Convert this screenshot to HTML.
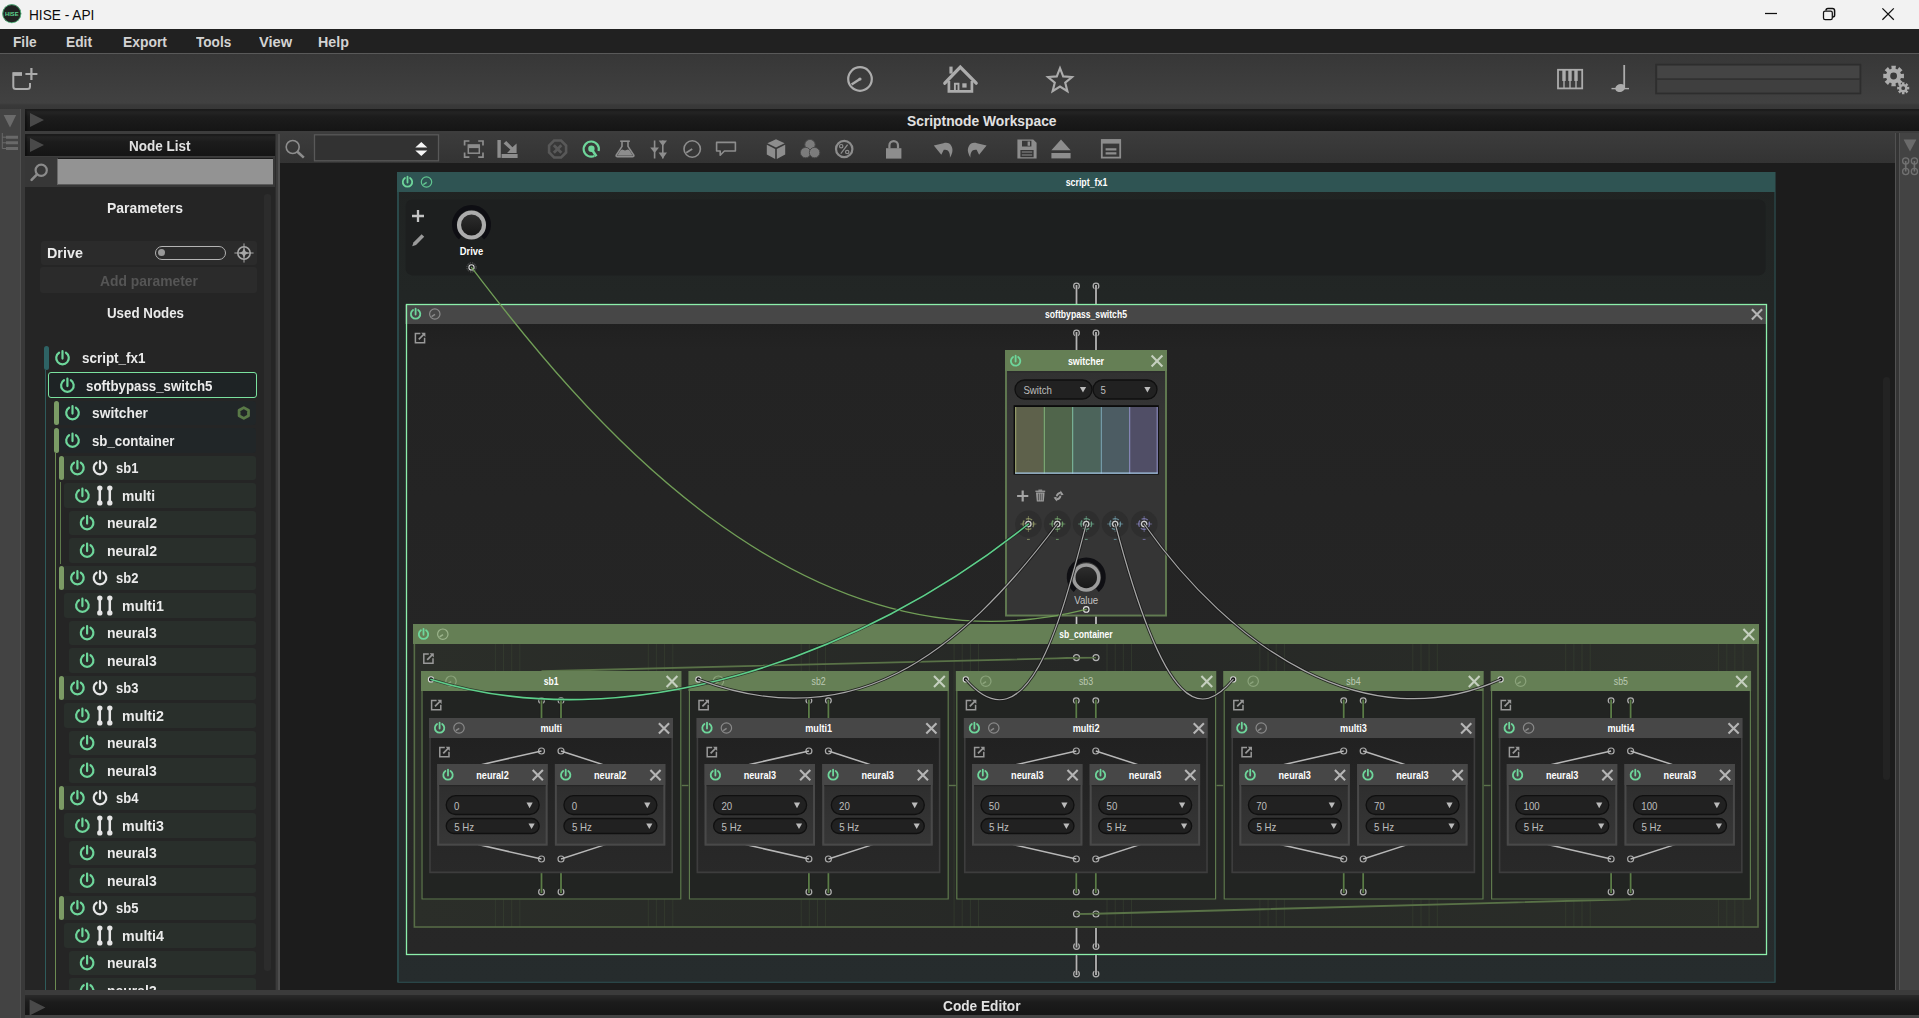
<!DOCTYPE html>
<html lang="en"><head><meta charset="utf-8"><title>HISE - API</title>
<style>
html,body{margin:0;padding:0;background:#1d1d1d;}
body{width:1919px;height:1018px;position:relative;overflow:hidden;font-family:"Liberation Sans",sans-serif;}
#app{position:absolute;left:0;top:0;width:1919px;height:1018px;overflow:hidden;opacity:.9999;will-change:opacity;}
#app div,#app span,#app svg,#app nav,#app ul,#app li,#app header,#app section,#app aside,#app footer,#app h1,#app h2,#app a{position:absolute;margin:0;padding:0;box-sizing:border-box;list-style:none;}
.t{white-space:nowrap;transform-origin:0 50%;display:block;}
svg text{font-family:"Liberation Sans",sans-serif;}
</style></head><body><div id="app">
<header style="left:0;top:0;width:1919px;height:29px;background:#f3f3f3">
<svg style="left:1px;top:3px" width="22" height="22" viewBox="0 0 22 22"><circle cx="10.8" cy="10.7" r="9.4" fill="#222423"/><circle cx="10.8" cy="10.7" r="9.1" fill="none" stroke="#5bcf8c" stroke-width="0.9" stroke-opacity="0.85"/><text x="10.8" y="12.8" font-size="5.8" font-weight="700" fill="#5fd692" text-anchor="middle" textLength="13.4" lengthAdjust="spacingAndGlyphs">HISE</text></svg>
<h1 class="t" style="left:28.50px;top:6px;font-size:15px;line-height:17px;font-weight:400;color:#0c0c0c;transform:scaleX(0.9108)">HISE - API</h1>
<svg style="left:1750px;top:0" width="169" height="29" viewBox="0 0 169 29" fill="none" stroke="#111" stroke-width="1.25"><path d="M15 13.5H27"/><rect x="73.5" y="11.2" width="8.8" height="8.4" rx="1.6"/><path d="M76 10.6a2 2 0 0 1 2-2H82.4a2.2 2.2 0 0 1 2.2 2.2V15a2 2 0 0 1-1.9 2" stroke-width="1.5"/><path d="M132.4 8.4L143.8 19.8M143.8 8.4L132.4 19.8"/></svg>
</header>
<nav style="left:0;top:29px;width:1919px;height:25px;background:#222222;border-bottom:1px solid #5a5a5a">
<a class="t" style="left:13.00px;top:5px;font-size:14.6px;line-height:16px;font-weight:700;color:#d4d4d4;transform:scaleX(0.9383)">File</a>
<a class="t" style="left:66.00px;top:5px;font-size:14.6px;line-height:16px;font-weight:700;color:#d4d4d4;transform:scaleX(0.9429)">Edit</a>
<a class="t" style="left:123.00px;top:5px;font-size:14.6px;line-height:16px;font-weight:700;color:#d4d4d4;transform:scaleX(0.9516)">Export</a>
<a class="t" style="left:195.70px;top:5px;font-size:14.6px;line-height:16px;font-weight:700;color:#d4d4d4;transform:scaleX(0.9327)">Tools</a>
<a class="t" style="left:258.50px;top:5px;font-size:14.6px;line-height:16px;font-weight:700;color:#d4d4d4;transform:scaleX(1.0058)">View</a>
<a class="t" style="left:318.40px;top:5px;font-size:14.6px;line-height:16px;font-weight:700;color:#d4d4d4;transform:scaleX(0.9767)">Help</a>
</nav>
<div style="left:0;top:54px;width:1919px;height:55px;background:linear-gradient(#383838 0,#424242 49px,#3a3a3a 51px,#383838 55px)">
<svg style="left:8px;top:10px" width="34" height="32" viewBox="8 64 34 32" fill="none" stroke="#adadad" stroke-width="2"><path d="M22 73.2H13.3V86.5a2.6 2.6 0 0 0 2.6 2.6H27.4a2.6 2.6 0 0 0 2.6-2.6V83"/><path d="M13 74.2H22" stroke-width="3.4"/><path d="M31.4 68V80M25.4 74H37.4" stroke-width="2.2"/></svg>
<svg style="left:840px;top:6px" width="240" height="40" viewBox="840 60 240 40" fill="none" stroke="#adadad" stroke-width="2.2" stroke-linejoin="miter"><circle cx="860" cy="79" r="11.8"/><path d="M860 79L851.6 84.6" stroke-width="2.4"/><circle cx="860" cy="79" r="1.6" fill="#adadad" stroke="none"/><path d="M944.8 83.2L960.3 67.2L976.2 83.2" stroke-width="3.3" stroke-linecap="round"/><path d="M948.9 81V91.3H971.9V81" stroke-width="2.7"/><path d="M954.9 92V83.7H958.5V92" stroke-width="1.9"/><rect x="962.3" y="83.3" width="4.3" height="4.3" fill="#adadad" stroke="none"/><rect x="949.4" y="66.6" width="3.2" height="7" fill="#adadad" stroke="none"/><path d="M1060 68.2L1063.2 76.4L1072 77L1065.2 82.6L1067.4 91.2L1060 86.5L1052.6 91.2L1054.8 82.6L1048 77L1056.8 76.4Z" stroke-width="2.1"/></svg>
<svg style="left:1550px;top:4px" width="369" height="46" viewBox="1550 58 369 46" fill="none" stroke="#adadad" stroke-width="1.8"><rect x="1558" y="69.8" width="24.2" height="18.6"/><path d="M1564 70V88M1570 70V88M1576 70V88" stroke-width="1.4"/><path d="M1564 70V81M1570 70V81M1576 70V81" stroke-width="3.4"/><path d="M1624.2 65V88" stroke-width="1.8"/><ellipse cx="1620.2" cy="88" rx="5" ry="3.9" fill="#adadad" stroke="none" transform="rotate(-20 1620.2 88)"/><path d="M1611.5 88.6H1629" stroke-width="1.4"/><rect x="1656" y="64.5" width="204.5" height="29" fill="#3a3a3a" stroke="#2e2e2e" stroke-width="1.6"/><path d="M1657 79H1859.6" stroke="#303030" stroke-width="1.4"/><rect x="1657.4" y="65.8" width="201.8" height="12.4" fill="#454545" stroke="none"/><rect x="1657.4" y="80" width="201.8" height="12.4" fill="#404040" stroke="none"/></svg>
<svg style="left:1875px;top:6px" width="44" height="44" viewBox="1875 60 44 44"><path fill-rule="evenodd" fill="#adadad" d="M1903.94,73.69 L1903.94,78.31 L1900.95,77.95 L1900.17,79.82 L1902.55,81.68 L1899.28,84.95 L1897.42,82.57 L1895.55,83.35 L1895.91,86.34 L1891.29,86.34 L1891.65,83.35 L1889.78,82.57 L1887.92,84.95 L1884.65,81.68 L1887.03,79.82 L1886.25,77.95 L1883.26,78.31 L1883.26,73.69 L1886.25,74.05 L1887.03,72.18 L1884.65,70.32 L1887.92,67.05 L1889.78,69.43 L1891.65,68.65 L1891.29,65.66 L1895.91,65.66 L1895.55,68.65 L1897.42,69.43 L1899.28,67.05 L1902.55,70.32 L1900.17,72.18 L1900.95,74.05Z M1897.00,76.00 a3.4,3.4 0 1,0 -6.8,0 a3.4,3.4 0 1,0 6.8,0Z"/><path fill-rule="evenodd" fill="#adadad" d="M1909.25,86.85 L1909.25,89.55 L1907.45,89.33 L1907.00,90.41 L1908.43,91.52 L1906.52,93.43 L1905.41,92.00 L1904.33,92.45 L1904.55,94.25 L1901.85,94.25 L1902.07,92.45 L1900.99,92.00 L1899.88,93.43 L1897.97,91.52 L1899.40,90.41 L1898.95,89.33 L1897.15,89.55 L1897.15,86.85 L1898.95,87.07 L1899.40,85.99 L1897.97,84.88 L1899.88,82.97 L1900.99,84.40 L1902.07,83.95 L1901.85,82.15 L1904.55,82.15 L1904.33,83.95 L1905.41,84.40 L1906.52,82.97 L1908.43,84.88 L1907.00,85.99 L1907.45,87.07Z M1905.10,88.20 a1.9,1.9 0 1,0 -3.8,0 a1.9,1.9 0 1,0 3.8,0Z"/></svg>
</div>
<div style="left:0;top:109px;width:20px;height:909px;background:#444444"></div>
<div style="left:20px;top:109px;width:5px;height:909px;background:#3a3a3a;border-left:1px solid #505050"></div>
<svg style="left:0;top:109px" width="20" height="50" viewBox="0 109 20 50"><path d="M3.6 115H16.2L10 127.4Z" fill="#6c6c6c"/><g fill="none" stroke="#6a6a6a"><path d="M2.3 133V148.5H6" stroke-width="1"/><path d="M2.3 137.2H6M2.3 142.8H6" stroke-width="1"/><path d="M6 137.2H18M6 142.8H18M6 148.5H18" stroke-width="3"/></g></svg>
<div style="left:25px;top:109px;width:1894px;height:22px;background:linear-gradient(#2b2b2b 0,#1d1d1d 35%,#161616 100%);box-shadow:inset 2px 2px 2px rgba(0,0,0,.35)">
<svg style="left:4px;top:3px" width="16" height="16" viewBox="0 0 16 16"><path d="M1 1L15 8L1 15Z" fill="#4a4a4a"/></svg>
<h2 class="t" style="left:882.25px;top:3px;font-size:15px;line-height:17px;font-weight:700;color:#e2e2e2;transform:scaleX(0.9213)">Scriptnode Workspace</h2>
</div>
<div style="left:25px;top:131px;width:1894px;height:3px;background:#3e3e3e"></div>
<div style="left:1895px;top:133px;width:24px;height:862px;background:#444444;border-left:1px solid #525252"></div>
<div style="left:1896px;top:133px;width:3.8px;height:862px;background:#363636;border-right:1px solid #535353"></div>
<svg style="left:1899px;top:134px" width="20" height="46" viewBox="1899 134 20 46"><path d="M1903.6 139.4H1916.4L1910 151.6Z" fill="#6c6c6c"/><g fill="none" stroke="#727272" stroke-width="1.3"><circle cx="1905.7" cy="161" r="3.1"/><circle cx="1914.4" cy="161" r="3.1"/><circle cx="1905.7" cy="171.5" r="3.1"/><circle cx="1914.4" cy="171.5" r="3.1"/><path d="M1905.7 161V171.5M1914.4 161V171.5" stroke-width="1.6"/></g></svg>
<footer style="left:25px;top:990px;width:1894px;height:28px;background:#3c3c3c">
<div style="left:0;top:5px;width:1894px;height:20px;background:linear-gradient(#2b2b2b 0,#1d1d1d 35%,#161616 100%)"></div>
<div style="left:0;top:25px;width:1894px;height:3px;background:#454545"></div>
<svg style="left:4px;top:8.5px" width="17" height="17" viewBox="0 0 17 17"><path d="M0.6 0.6L16.4 8.5L0.6 16.4Z" fill="#4a4a4a"/></svg>
<h2 class="t" style="left:918.25px;top:7px;font-size:15px;line-height:17px;font-weight:700;color:#e2e2e2;transform:scaleX(0.9118)">Code Editor</h2>
</footer>
<aside style="left:25px;top:134px;width:255px;height:856px;background:#262626;overflow:hidden">
<div style="left:0;top:0;width:250px;height:22px;background:linear-gradient(#2b2b2b 0,#1d1d1d 35%,#161616 100%);box-shadow:inset 2px 2px 2px rgba(0,0,0,.35)">
<svg style="left:4px;top:3px" width="16" height="16" viewBox="0 0 16 16"><path d="M1 1L15 8L1 15Z" fill="#4a4a4a"/></svg>
<h2 class="t" style="left:104.25px;top:3px;font-size:15px;line-height:17px;font-weight:700;color:#e2e2e2;transform:scaleX(0.9000)">Node List</h2>
</div>
<div style="left:0;top:22px;width:250px;height:31px;background:#383838;border-top:1px solid #3e3e3e">
<svg style="left:3px;top:3px" width="26" height="26" viewBox="28 160 26 26" fill="none" stroke="#8c8c8c" stroke-width="2.2" stroke-linecap="round"><circle cx="41.2" cy="170.2" r="5.6"/><path d="M37 174.4L31.6 179.8" stroke-width="2.6"/></svg>
<div style="left:32px;top:1px;width:216px;height:27px;background:#949494;border-top:1.5px solid #1e1e1e;border-bottom:1.5px solid #5c5c5c;border-left:1px solid #6a6a6a"></div>
</div>
<div style="left:250px;top:0;width:5px;height:856px;background:#3c3c3c;border-right:1px solid #242424;border-left:1px solid #2e2e2e"></div>
<div style="left:253.4px;top:0;width:1.2px;height:856px;background:#4e4e4e"></div>
<div style="left:239px;top:60px;width:6.5px;height:777px;background:#2d2d2d;border-radius:3px"></div>
<h2 class="t" style="left:82.00px;top:65px;font-size:15px;line-height:17px;font-weight:700;color:#ececec;transform:scaleX(0.9299)">Parameters</h2>
<div style="left:16px;top:106.5px;width:215.5px;height:24.5px;background:#2c2c2c;border-radius:3px"></div>
<span class="t" style="left:21.50px;top:110px;font-size:15.4px;line-height:17px;font-weight:700;color:#ececec;transform:scaleX(0.9319)">Drive</span>
<div style="left:129.5px;top:112px;width:71.5px;height:13.6px;border:1.6px solid #b4b4b4;border-radius:7px"></div>
<div style="left:132.6px;top:115.3px;width:7px;height:7px;border-radius:50%;background:#9a9a9a"></div>
<svg style="left:209px;top:109px" width="20" height="20" viewBox="-10 -10 20 20" fill="none" stroke="#a8a8a8"><circle r="6.2" stroke-width="1.6"/><path d="M0 -9.6V9.6M-9.6 0H9.6" stroke-width="1"/><path d="M0 -5L1.6 -1.6L5 0L1.6 1.6L0 5L-1.6 1.6L-5 0L-1.6 -1.6Z" fill="#a8a8a8" stroke="none"/></svg>
<div style="left:15px;top:133px;width:217px;height:26.4px;background:#2c2c2c;border-radius:3px"></div>
<span class="t" style="left:75.00px;top:138px;font-size:15.2px;line-height:17px;font-weight:700;color:#565656;transform:scaleX(0.9135)">Add parameter</span>
<h2 class="t" style="left:81.50px;top:170px;font-size:15px;line-height:17px;font-weight:700;color:#ececec;transform:scaleX(0.8882)">Used Nodes</h2>
<ul style="left:0;top:0;width:250px;height:856px">
<div style="left:20.4px;top:236px;width:1px;height:620px;background:#2f5c5c"></div>
<div style="left:30.2px;top:319px;width:1.2px;height:537px;background:#6d8c52"></div>
<li><div style="left:19.0px;top:211.8px;width:5px;height:24.4px;background:#2f6466;border-radius:2.5px"></div><span class="t" style="left:56.50px;top:215px;font-size:15.4px;line-height:17px;font-weight:700;color:#ececec;transform:scaleX(0.8727)">script_fx1</span></li>
<li><div style="left:23.0px;top:239.1px;width:209.0px;height:24.4px;background:#1f2426;border-radius:3px;border:1.6px solid #7be3a0;height:26px;margin-top:-0.8px"></div><span class="t" style="left:61.40px;top:243px;font-size:15.4px;line-height:17px;font-weight:700;color:#ececec;transform:scaleX(0.8643)">softbypass_switch5</span></li>
<li><div style="left:32.0px;top:266.8px;width:199.0px;height:24.4px;background:#222729;border-radius:3px;"></div><div style="left:29.0px;top:266.8px;width:5px;height:24.4px;background:#7c9c66;border-radius:2.5px"></div><span class="t" style="left:66.50px;top:270px;font-size:15.4px;line-height:17px;font-weight:700;color:#ececec;transform:scaleX(0.8963)">switcher</span></li>
<li><div style="left:32.0px;top:294.3px;width:199.0px;height:24.4px;background:#222729;border-radius:3px;"></div><div style="left:29.0px;top:294.3px;width:5px;height:24.4px;background:#7c9c66;border-radius:2.5px"></div><span class="t" style="left:66.50px;top:298px;font-size:15.4px;line-height:17px;font-weight:700;color:#ececec;transform:scaleX(0.8607)">sb_container</span></li>
<li><div style="left:37.0px;top:321.8px;width:194.0px;height:24.4px;background:#2a302c;border-radius:3px;"></div><div style="left:34.0px;top:321.8px;width:5px;height:24.4px;background:#7c9c66;border-radius:2.5px"></div><span class="t" style="left:91.40px;top:325px;font-size:15.4px;line-height:17px;font-weight:700;color:#ececec;transform:scaleX(0.8441)">sb1</span></li>
<div style="left:35.2px;top:347.5px;width:1.2px;height:82px;background:#5f7a4c"></div>
<li><div style="left:39.0px;top:349.3px;width:192.0px;height:24.4px;background:#2a302c;border-radius:3px;"></div><span class="t" style="left:96.80px;top:353px;font-size:15.4px;line-height:17px;font-weight:700;color:#ececec;transform:scaleX(0.8971)">multi</span></li>
<li><div style="left:44.2px;top:376.8px;width:186.8px;height:24.4px;background:#2a302c;border-radius:3px;"></div><span class="t" style="left:81.50px;top:380px;font-size:15.4px;line-height:17px;font-weight:700;color:#ececec;transform:scaleX(0.9127)">neural2</span></li>
<li><div style="left:44.2px;top:404.3px;width:186.8px;height:24.4px;background:#2a302c;border-radius:3px;"></div><span class="t" style="left:81.50px;top:408px;font-size:15.4px;line-height:17px;font-weight:700;color:#ececec;transform:scaleX(0.9127)">neural2</span></li>
<li><div style="left:37.0px;top:431.8px;width:194.0px;height:24.4px;background:#2a302c;border-radius:3px;"></div><div style="left:34.0px;top:431.8px;width:5px;height:24.4px;background:#7c9c66;border-radius:2.5px"></div><span class="t" style="left:91.40px;top:435px;font-size:15.4px;line-height:17px;font-weight:700;color:#ececec;transform:scaleX(0.8441)">sb2</span></li>
<li><div style="left:39.0px;top:459.3px;width:192.0px;height:24.4px;background:#2a302c;border-radius:3px;"></div><span class="t" style="left:96.80px;top:463px;font-size:15.4px;line-height:17px;font-weight:700;color:#ececec;transform:scaleX(0.9261)">multi1</span></li>
<li><div style="left:44.2px;top:486.8px;width:186.8px;height:24.4px;background:#2a302c;border-radius:3px;"></div><span class="t" style="left:81.50px;top:490px;font-size:15.4px;line-height:17px;font-weight:700;color:#ececec;transform:scaleX(0.9073)">neural3</span></li>
<li><div style="left:44.2px;top:514.3px;width:186.8px;height:24.4px;background:#2a302c;border-radius:3px;"></div><span class="t" style="left:81.50px;top:518px;font-size:15.4px;line-height:17px;font-weight:700;color:#ececec;transform:scaleX(0.9073)">neural3</span></li>
<li><div style="left:37.0px;top:541.8px;width:194.0px;height:24.4px;background:#2a302c;border-radius:3px;"></div><div style="left:34.0px;top:541.8px;width:5px;height:24.4px;background:#7c9c66;border-radius:2.5px"></div><span class="t" style="left:91.40px;top:545px;font-size:15.4px;line-height:17px;font-weight:700;color:#ececec;transform:scaleX(0.8441)">sb3</span></li>
<li><div style="left:39.0px;top:569.3px;width:192.0px;height:24.4px;background:#2a302c;border-radius:3px;"></div><span class="t" style="left:96.80px;top:573px;font-size:15.4px;line-height:17px;font-weight:700;color:#ececec;transform:scaleX(0.9261)">multi2</span></li>
<li><div style="left:44.2px;top:596.8px;width:186.8px;height:24.4px;background:#2a302c;border-radius:3px;"></div><span class="t" style="left:81.50px;top:600px;font-size:15.4px;line-height:17px;font-weight:700;color:#ececec;transform:scaleX(0.9073)">neural3</span></li>
<li><div style="left:44.2px;top:624.3px;width:186.8px;height:24.4px;background:#2a302c;border-radius:3px;"></div><span class="t" style="left:81.50px;top:628px;font-size:15.4px;line-height:17px;font-weight:700;color:#ececec;transform:scaleX(0.9073)">neural3</span></li>
<li><div style="left:37.0px;top:651.8px;width:194.0px;height:24.4px;background:#2a302c;border-radius:3px;"></div><div style="left:34.0px;top:651.8px;width:5px;height:24.4px;background:#7c9c66;border-radius:2.5px"></div><span class="t" style="left:91.40px;top:655px;font-size:15.4px;line-height:17px;font-weight:700;color:#ececec;transform:scaleX(0.8441)">sb4</span></li>
<li><div style="left:39.0px;top:679.3px;width:192.0px;height:24.4px;background:#2a302c;border-radius:3px;"></div><span class="t" style="left:96.80px;top:683px;font-size:15.4px;line-height:17px;font-weight:700;color:#ececec;transform:scaleX(0.9261)">multi3</span></li>
<li><div style="left:44.2px;top:706.8px;width:186.8px;height:24.4px;background:#2a302c;border-radius:3px;"></div><span class="t" style="left:81.50px;top:710px;font-size:15.4px;line-height:17px;font-weight:700;color:#ececec;transform:scaleX(0.9073)">neural3</span></li>
<li><div style="left:44.2px;top:734.3px;width:186.8px;height:24.4px;background:#2a302c;border-radius:3px;"></div><span class="t" style="left:81.50px;top:738px;font-size:15.4px;line-height:17px;font-weight:700;color:#ececec;transform:scaleX(0.9073)">neural3</span></li>
<li><div style="left:37.0px;top:761.8px;width:194.0px;height:24.4px;background:#2a302c;border-radius:3px;"></div><div style="left:34.0px;top:761.8px;width:5px;height:24.4px;background:#7c9c66;border-radius:2.5px"></div><span class="t" style="left:91.40px;top:765px;font-size:15.4px;line-height:17px;font-weight:700;color:#ececec;transform:scaleX(0.8441)">sb5</span></li>
<li><div style="left:39.0px;top:789.3px;width:192.0px;height:24.4px;background:#2a302c;border-radius:3px;"></div><span class="t" style="left:96.80px;top:793px;font-size:15.4px;line-height:17px;font-weight:700;color:#ececec;transform:scaleX(0.9261)">multi4</span></li>
<li><div style="left:44.2px;top:816.8px;width:186.8px;height:24.4px;background:#2a302c;border-radius:3px;"></div><span class="t" style="left:81.50px;top:820px;font-size:15.4px;line-height:17px;font-weight:700;color:#ececec;transform:scaleX(0.9073)">neural3</span></li>
<li><div style="left:44.2px;top:844.3px;width:186.8px;height:24.4px;background:#2a302c;border-radius:3px;"></div><span class="t" style="left:81.50px;top:848px;font-size:15.4px;line-height:17px;font-weight:700;color:#ececec;transform:scaleX(0.9073)">neural3</span></li>
</ul>
<svg style="left:0;top:0" width="250" height="856" viewBox="25 134 250 856"><path d="M65.93 352.72A6.3 6.3 0 1 1 59.07 352.72M62.5 351.00V358.60" fill="none" stroke="#6fd79c" stroke-width="2.2" stroke-linecap="round"/><path d="M70.83 380.22A6.3 6.3 0 1 1 63.97 380.22M67.4 378.50V386.10" fill="none" stroke="#6fd79c" stroke-width="2.2" stroke-linecap="round"/><path d="M75.93 407.72A6.3 6.3 0 1 1 69.07 407.72M72.5 406.00V413.60" fill="none" stroke="#6fd79c" stroke-width="2.2" stroke-linecap="round"/><path d="M243.8 407.6L248.5 410.3V415.7L243.8 418.4L239.1 415.7V410.3Z" fill="none" stroke="#5a7a48" stroke-width="2.8" stroke-linejoin="round"/><path d="M75.93 435.22A6.3 6.3 0 1 1 69.07 435.22M72.5 433.50V441.10" fill="none" stroke="#6fd79c" stroke-width="2.2" stroke-linecap="round"/><path d="M80.83 462.72A6.3 6.3 0 1 1 73.97 462.72M77.4 461.00V468.60" fill="none" stroke="#6fd79c" stroke-width="2.2" stroke-linecap="round"/><path d="M103.43 462.72A6.3 6.3 0 1 1 96.57 462.72M100 461.00V468.60" fill="none" stroke="#e8e8e8" stroke-width="2.2" stroke-linecap="round"/><path d="M85.83 490.22A6.3 6.3 0 1 1 78.97 490.22M82.4 488.50V496.10" fill="none" stroke="#6fd79c" stroke-width="2.2" stroke-linecap="round"/><g stroke="#e6e6e6" fill="#e6e6e6"><path d="M99.8 488.5V502.5M109.8 488.5V502.5" stroke-width="2.5"/><circle cx="99.8" cy="488.1" r="2.7" stroke="none"/><circle cx="99.8" cy="502.9" r="2.7" stroke="none"/><circle cx="109.8" cy="488.1" r="2.7" stroke="none"/><circle cx="109.8" cy="502.9" r="2.7" stroke="none"/></g><path d="M90.53 517.72A6.3 6.3 0 1 1 83.67 517.72M87.1 516.00V523.60" fill="none" stroke="#6fd79c" stroke-width="2.2" stroke-linecap="round"/><path d="M90.53 545.22A6.3 6.3 0 1 1 83.67 545.22M87.1 543.50V551.10" fill="none" stroke="#6fd79c" stroke-width="2.2" stroke-linecap="round"/><path d="M80.83 572.72A6.3 6.3 0 1 1 73.97 572.72M77.4 571.00V578.60" fill="none" stroke="#6fd79c" stroke-width="2.2" stroke-linecap="round"/><path d="M103.43 572.72A6.3 6.3 0 1 1 96.57 572.72M100 571.00V578.60" fill="none" stroke="#e8e8e8" stroke-width="2.2" stroke-linecap="round"/><path d="M85.83 600.22A6.3 6.3 0 1 1 78.97 600.22M82.4 598.50V606.10" fill="none" stroke="#6fd79c" stroke-width="2.2" stroke-linecap="round"/><g stroke="#e6e6e6" fill="#e6e6e6"><path d="M99.8 598.5V612.5M109.8 598.5V612.5" stroke-width="2.5"/><circle cx="99.8" cy="598.1" r="2.7" stroke="none"/><circle cx="99.8" cy="612.9" r="2.7" stroke="none"/><circle cx="109.8" cy="598.1" r="2.7" stroke="none"/><circle cx="109.8" cy="612.9" r="2.7" stroke="none"/></g><path d="M90.53 627.72A6.3 6.3 0 1 1 83.67 627.72M87.1 626.00V633.60" fill="none" stroke="#6fd79c" stroke-width="2.2" stroke-linecap="round"/><path d="M90.53 655.22A6.3 6.3 0 1 1 83.67 655.22M87.1 653.50V661.10" fill="none" stroke="#6fd79c" stroke-width="2.2" stroke-linecap="round"/><path d="M80.83 682.72A6.3 6.3 0 1 1 73.97 682.72M77.4 681.00V688.60" fill="none" stroke="#6fd79c" stroke-width="2.2" stroke-linecap="round"/><path d="M103.43 682.72A6.3 6.3 0 1 1 96.57 682.72M100 681.00V688.60" fill="none" stroke="#e8e8e8" stroke-width="2.2" stroke-linecap="round"/><path d="M85.83 710.22A6.3 6.3 0 1 1 78.97 710.22M82.4 708.50V716.10" fill="none" stroke="#6fd79c" stroke-width="2.2" stroke-linecap="round"/><g stroke="#e6e6e6" fill="#e6e6e6"><path d="M99.8 708.5V722.5M109.8 708.5V722.5" stroke-width="2.5"/><circle cx="99.8" cy="708.1" r="2.7" stroke="none"/><circle cx="99.8" cy="722.9" r="2.7" stroke="none"/><circle cx="109.8" cy="708.1" r="2.7" stroke="none"/><circle cx="109.8" cy="722.9" r="2.7" stroke="none"/></g><path d="M90.53 737.72A6.3 6.3 0 1 1 83.67 737.72M87.1 736.00V743.60" fill="none" stroke="#6fd79c" stroke-width="2.2" stroke-linecap="round"/><path d="M90.53 765.22A6.3 6.3 0 1 1 83.67 765.22M87.1 763.50V771.10" fill="none" stroke="#6fd79c" stroke-width="2.2" stroke-linecap="round"/><path d="M80.83 792.72A6.3 6.3 0 1 1 73.97 792.72M77.4 791.00V798.60" fill="none" stroke="#6fd79c" stroke-width="2.2" stroke-linecap="round"/><path d="M103.43 792.72A6.3 6.3 0 1 1 96.57 792.72M100 791.00V798.60" fill="none" stroke="#e8e8e8" stroke-width="2.2" stroke-linecap="round"/><path d="M85.83 820.22A6.3 6.3 0 1 1 78.97 820.22M82.4 818.50V826.10" fill="none" stroke="#6fd79c" stroke-width="2.2" stroke-linecap="round"/><g stroke="#e6e6e6" fill="#e6e6e6"><path d="M99.8 818.5V832.5M109.8 818.5V832.5" stroke-width="2.5"/><circle cx="99.8" cy="818.1" r="2.7" stroke="none"/><circle cx="99.8" cy="832.9" r="2.7" stroke="none"/><circle cx="109.8" cy="818.1" r="2.7" stroke="none"/><circle cx="109.8" cy="832.9" r="2.7" stroke="none"/></g><path d="M90.53 847.72A6.3 6.3 0 1 1 83.67 847.72M87.1 846.00V853.60" fill="none" stroke="#6fd79c" stroke-width="2.2" stroke-linecap="round"/><path d="M90.53 875.22A6.3 6.3 0 1 1 83.67 875.22M87.1 873.50V881.10" fill="none" stroke="#6fd79c" stroke-width="2.2" stroke-linecap="round"/><path d="M80.83 902.72A6.3 6.3 0 1 1 73.97 902.72M77.4 901.00V908.60" fill="none" stroke="#6fd79c" stroke-width="2.2" stroke-linecap="round"/><path d="M103.43 902.72A6.3 6.3 0 1 1 96.57 902.72M100 901.00V908.60" fill="none" stroke="#e8e8e8" stroke-width="2.2" stroke-linecap="round"/><path d="M85.83 930.22A6.3 6.3 0 1 1 78.97 930.22M82.4 928.50V936.10" fill="none" stroke="#6fd79c" stroke-width="2.2" stroke-linecap="round"/><g stroke="#e6e6e6" fill="#e6e6e6"><path d="M99.8 928.5V942.5M109.8 928.5V942.5" stroke-width="2.5"/><circle cx="99.8" cy="928.1" r="2.7" stroke="none"/><circle cx="99.8" cy="942.9" r="2.7" stroke="none"/><circle cx="109.8" cy="928.1" r="2.7" stroke="none"/><circle cx="109.8" cy="942.9" r="2.7" stroke="none"/></g><path d="M90.53 957.72A6.3 6.3 0 1 1 83.67 957.72M87.1 956.00V963.60" fill="none" stroke="#6fd79c" stroke-width="2.2" stroke-linecap="round"/><path d="M90.53 985.22A6.3 6.3 0 1 1 83.67 985.22M87.1 983.50V991.10" fill="none" stroke="#6fd79c" stroke-width="2.2" stroke-linecap="round"/></svg>
</aside>
<div style="left:280px;top:133px;width:1615px;height:30px;background:linear-gradient(#3d3d3d,#343434)">
<svg style="left:0;top:0" width="1616" height="30" viewBox="280 133 1616 30"><g fill="none" stroke="#8e8e8e" stroke-width="1.6"><circle cx="292.7" cy="147" r="6.5"/><path d="M297.4 151.8L303.8 157.6" stroke-width="2.6"/></g><rect x="314.5" y="134.8" width="124" height="26" fill="#333333" stroke="#5a5a5a" stroke-width="1.3"/><path d="M421.3 142L427.3 147.6H415.3ZM421.3 156L427.3 150.4H415.3Z" fill="#f6f6f6"/><g fill="none" stroke="#8e8e8e" stroke-width="1.7"><path d="M464.6 145.6V141H469.4M478.2 141H483V145.6M483 152.6V157.2H478.2M469.4 157.2H464.6V152.6"/><rect x="468.3" y="145" width="11" height="8.2" stroke-width="1.5"/><path d="M468.3 146.4H479.3" stroke-width="3.4"/></g><g fill="#8e8e8e"><rect x="497.4" y="140" width="3.4" height="17.8"/><rect x="501.6" y="154" width="16" height="4"/><path d="M503.6 143.6L506.2 141L512.4 147.2L516.6 143.4V153H507L510.4 149.6Z"/></g><g fill="none" stroke="#595959" stroke-width="2.6"><path d="M566.10 152.52 L561.12 157.50 L554.08 157.50 L549.10 152.52 L549.10 145.48 L554.08 140.50 L561.12 140.50 L566.10 145.48Z"/><path d="M553.8 145.2L561.4 152.8M561.4 145.2L553.8 152.8" stroke-width="2.8"/></g><g fill="none" stroke="#6fd79c" stroke-width="2.2"><path d="M594.4 156A7.6 7.6 0 1 1 598.6 151"/><circle cx="591.4" cy="148.8" r="3.2" fill="#6fd79c" stroke="none"/><path d="M591.8 149.4L596.4 156.2" stroke-width="2.6"/></g><g fill="none" stroke="#8e8e8e" stroke-width="1.6" stroke-linejoin="round"><path d="M620.2 141.2H629.8"/><path d="M622 141.4V146.4L616.2 155.2Q615.8 156.6 617.4 156.6H632.6Q634.2 156.6 633.8 155.2L628 146.4V141.4"/><path d="M620.4 150.4L622 149.6L625 150.6L628 149.6L629.6 150.4L632.6 155.6H617.4Z" fill="#8e8e8e" stroke="none"/></g><g fill="#8e8e8e" stroke="#8e8e8e" stroke-width="1.6"><path d="M654.6 140.4V158.4M662.8 140.4V158.4" fill="none"/><path d="M650.2 147.6H659L654.6 153Z" stroke="none"/><path d="M658.6 140.6H667L662.8 146Z" stroke="none"/><path d="M658.6 152.6H667L662.8 158.4Z" stroke="none"/></g><g fill="none" stroke="#8e8e8e" stroke-width="1.6"><circle cx="692.2" cy="149" r="8.2"/><path d="M692.2 149L686.2 152.8" stroke-width="1.8"/></g><path d="M716.6 142.4H735.4V151H724.4L720.2 155.2V151H716.6Z" fill="none" stroke="#8e8e8e" stroke-width="1.6" stroke-linejoin="round"/><g fill="#8e8e8e"><path d="M776 139.2L784.6 143.2L776 147.4L767.4 143.2Z"/><path d="M766.8 144.8L775.2 148.9V159L766.8 154.6Z"/><path d="M785.2 144.8L776.8 148.9V159L785.2 154.6Z"/></g><g fill="#8e8e8e" fill-opacity="0.8" stroke="#4a4a4a" stroke-width="1"><circle cx="810" cy="144.6" r="5.2"/><circle cx="805.6" cy="152.6" r="5.2"/><circle cx="814.6" cy="152.6" r="5.2"/></g><g fill="none" stroke="#8e8e8e" stroke-width="1.6"><circle cx="844.2" cy="149" r="8.2" stroke-width="2.2"/><path d="M847.6 144.6L840.8 153.6" stroke-width="1.3"/><circle cx="841.2" cy="146.2" r="1.7" stroke-width="1.2"/><circle cx="847.2" cy="152" r="1.7" stroke-width="1.2"/></g><g fill="#8e8e8e"><rect x="886" y="148.2" width="15.4" height="10.4"/><path d="M889.4 148.6V145.4a4.3 4.3 0 0 1 8.6 0V148.6" fill="none" stroke="#8e8e8e" stroke-width="2.2"/></g><path d="M933.8 145.4L943.4 143.2C950 141 953.6 147 952.2 152.6C951.7 154.6 950.9 156.4 949.9 157.8C950.4 152.2 948 148.8 943.8 149.8L941.3 154.8Z" fill="#8e8e8e"/><path d="M933.8 145.4L943.4 143.2C950 141 953.6 147 952.2 152.6C951.7 154.6 950.9 156.4 949.9 157.8C950.4 152.2 948 148.8 943.8 149.8L941.3 154.8Z" fill="#8e8e8e" transform="translate(1920.4 0) scale(-1 1)"/><path fill-rule="evenodd" fill="#8e8e8e" d="M1017.4 139.4H1033.2L1036.6 142.8V158.6H1017.4ZM1022 140.8V146.6H1031.4V140.8ZM1027.6 141.6H1030V145.8H1027.6ZM1020.4 150H1033.6V157.2H1020.4ZM1021.8 151.6V152.6H1032.2V151.6ZM1021.8 154.4V155.4H1032.2V154.4Z"/><path d="M1061 139.6L1070.6 150.2H1051.4Z" fill="#8e8e8e"/><rect x="1051.4" y="153" width="19.2" height="5.4" fill="#8e8e8e"/><g fill="none" stroke="#8e8e8e" stroke-width="1.8"><rect x="1101.8" y="140" width="18.4" height="17.6"/><path d="M1101.8 141.6H1120.2" stroke-width="4"/><path d="M1105.6 149.4H1116.4M1105.6 153.4H1116.4" stroke-width="2.4"/></g></svg>
</div>
<section style="left:280px;top:163px;width:1615px;height:827px;background:#1d1d1d;overflow:hidden">
<svg style="left:0;top:0" width="1616" height="827" viewBox="280 163 1616 827"><defs><linearGradient id="kg" x1="0" y1="0" x2="0" y2="1"><stop offset="0" stop-color="#303030"/><stop offset="1" stop-color="#161616"/></linearGradient><linearGradient id="gfx" x1="0" y1="0" x2="0" y2="1"><stop offset="0" stop-color="#212423"/><stop offset="0.15" stop-color="#232726"/><stop offset="1" stop-color="#272d2e"/></linearGradient><linearGradient id="gsb" x1="0" y1="0" x2="0" y2="1"><stop offset="0" stop-color="#1f1f1f"/><stop offset="0.07" stop-color="#242424"/><stop offset="1" stop-color="#282828"/></linearGradient><linearGradient id="gnb" x1="0" y1="0" x2="0" y2="1"><stop offset="0" stop-color="#2c2c2c"/><stop offset="1" stop-color="#383838"/></linearGradient><linearGradient id="gmu" x1="0" y1="0" x2="0" y2="1"><stop offset="0" stop-color="#212121"/><stop offset="1" stop-color="#2a2a2a"/></linearGradient><linearGradient id="gsw" x1="0" y1="0" x2="0" y2="1"><stop offset="0" stop-color="#303030"/><stop offset="0.25" stop-color="#363636"/><stop offset="1" stop-color="#363636"/></linearGradient><linearGradient id="gct" x1="0" y1="0" x2="1" y2="0"><stop offset="0" stop-color="#2c2f2a"/><stop offset="0.5" stop-color="#272927"/><stop offset="1" stop-color="#2c2f2a"/></linearGradient></defs>
<rect x="397" y="172" width="1378.5" height="810.5" fill="url(#gfx)"/>
<path d="M398 192V982.2H1775V192" fill="none" stroke="#2e5254" stroke-width="1.1"/><rect x="397" y="192" width="2" height="790" fill="#2b4a4b"/>
<rect x="397" y="172" width="1378.5" height="20" fill="#305554"/>
<path d="M410.06 178.06A4.7 4.7 0 1 1 404.94 178.06M407.5 176.60V182.60" fill="none" stroke="#6fd79c" stroke-width="1.8" stroke-linecap="round"/>
<g fill="none" stroke="#62c792" stroke-width="1.2"><circle cx="426.5" cy="182" r="5.2"/><path d="M426.7 182.4L423.3 184.6" stroke-width="1.5"/></g>
<text x="1086.50" y="185.60" font-size="10" font-weight="700" fill="#ffffff" text-anchor="middle" textLength="41.70" lengthAdjust="spacingAndGlyphs">script_fx1</text>
<rect x="405.6" y="199.4" width="1360" height="76" rx="7" fill="#1e2020"/>
<path d="M418 210V222M412 216H424" stroke="#c4c4c4" stroke-width="2.3" fill="none"/>
<path d="M412.2 246.2L413.4 242.4L421.6 234.2L424.2 236.8L416 245Z" fill="#9c9c9c"/>
<path d="M460.44 237.78A17.2 17.2 0 1 1 482.56 237.78" fill="none" stroke="#0f0f14" stroke-width="4.6"/><circle cx="471.5" cy="225.0" r="12.5" fill="url(#kg)" stroke="#adadad" stroke-width="4.1"/>
<text x="471.50" y="255.36" font-size="11" font-weight="700" fill="#ffffff" text-anchor="middle" textLength="23.50" lengthAdjust="spacingAndGlyphs">Drive</text>
<circle cx="471.5" cy="267.4" r="4.6" fill="none" stroke="#707070" stroke-width="0.8" stroke-dasharray="1.4 1"/><circle cx="471.5" cy="267.4" r="2.6" fill="#1e2020" stroke="#dcdcdc" stroke-width="1.1"/>
<circle cx="1076.5" cy="286" r="2.85" fill="none" stroke="#b0b0b0" stroke-width="1.25"/><path d="M1076.5 285.6V304" stroke="#1f1f1f" stroke-width="3.2" stroke-opacity="0.9"/><path d="M1076.5 285V304" stroke="#b4b4b4" stroke-width="1.8"/>
<circle cx="1096" cy="286" r="2.85" fill="none" stroke="#b0b0b0" stroke-width="1.25"/><path d="M1096 285.6V304" stroke="#1f1f1f" stroke-width="3.2" stroke-opacity="0.9"/><path d="M1096 285V304" stroke="#b4b4b4" stroke-width="1.8"/>
<rect x="406" y="304" width="1361" height="650.5" fill="url(#gsb)"/>
<rect x="405" y="304.5" width="1362" height="19.5" fill="#484848"/>
<rect x="406.5" y="304.5" width="1360" height="650" fill="none" stroke="#8df0ac" stroke-width="1.3"/>
<path d="M418.16 310.06A4.7 4.7 0 1 1 413.04 310.06M415.6 308.60V314.60" fill="none" stroke="#6fd79c" stroke-width="1.8" stroke-linecap="round"/>
<g fill="none" stroke="#8a8a8a" stroke-width="1.2"><circle cx="434.8" cy="314" r="5.2"/><path d="M435.0 314.4L431.6 316.6" stroke-width="1.5"/></g>
<text x="1086.00" y="317.60" font-size="10" font-weight="700" fill="#ffffff" text-anchor="middle" textLength="82.00" lengthAdjust="spacingAndGlyphs">softbypass_switch5</text>
<path d="M1751.9 309.29999999999995L1762.1 319.5M1762.1 309.29999999999995L1751.9 319.5" stroke="#b6b6b6" stroke-width="2.1" fill="none"/>
<g fill="none" stroke="#9a9a9a" stroke-width="1.5"><path d="M420.4 333.6H415.4V342.8H424.6V337.8"/><path d="M418.8 339.4L424 334.2" stroke-width="1.7"/><path d="M421.2 332.8H425.4V337Z" fill="#9a9a9a" stroke="none"/></g>
<circle cx="1076.5" cy="333" r="2.85" fill="none" stroke="#b0b0b0" stroke-width="1.25"/><path d="M1076.5 332.6V351" stroke="#1f1f1f" stroke-width="3.2" stroke-opacity="0.9"/><path d="M1076.5 332V351" stroke="#b4b4b4" stroke-width="1.8"/>
<circle cx="1096" cy="333" r="2.85" fill="none" stroke="#b0b0b0" stroke-width="1.25"/><path d="M1096 332.6V351" stroke="#1f1f1f" stroke-width="3.2" stroke-opacity="0.9"/><path d="M1096 332V351" stroke="#b4b4b4" stroke-width="1.8"/>
<circle cx="1076.5" cy="946.5" r="2.85" fill="none" stroke="#b0b0b0" stroke-width="1.25"/><path d="M1076.5 928V946.9" stroke="#1f1f1f" stroke-width="3.2" stroke-opacity="0.9"/><path d="M1076.5 928V947.5" stroke="#b4b4b4" stroke-width="1.8"/>
<circle cx="1096" cy="946.5" r="2.85" fill="none" stroke="#b0b0b0" stroke-width="1.25"/><path d="M1096 928V946.9" stroke="#1f1f1f" stroke-width="3.2" stroke-opacity="0.9"/><path d="M1096 928V947.5" stroke="#b4b4b4" stroke-width="1.8"/>
<circle cx="1076.5" cy="974" r="2.85" fill="none" stroke="#b0b0b0" stroke-width="1.25"/><path d="M1076.5 955V974.4" stroke="#1f1f1f" stroke-width="3.2" stroke-opacity="0.9"/><path d="M1076.5 955V975" stroke="#b4b4b4" stroke-width="1.8"/>
<circle cx="1096" cy="974" r="2.85" fill="none" stroke="#b0b0b0" stroke-width="1.25"/><path d="M1096 955V974.4" stroke="#1f1f1f" stroke-width="3.2" stroke-opacity="0.9"/><path d="M1096 955V975" stroke="#b4b4b4" stroke-width="1.8"/>
<path d="M1076.5 616V625M1096 616V625" stroke="#c8c8c8" stroke-width="1.7"/>
<rect x="1005" y="350" width="162" height="266.5" fill="url(#gsw)"/>
<rect x="1006" y="351" width="160" height="264.5" fill="none" stroke="#637c52" stroke-width="1.9"/>
<rect x="1005" y="350" width="162" height="21" fill="#668056"/>
<path d="M1007 371.8H1165" stroke="#2c2c2c" stroke-width="1.2"/>
<path d="M1018.16 357.06A4.7 4.7 0 1 1 1013.04 357.06M1015.6 355.60V361.60" fill="none" stroke="#6fd79c" stroke-width="1.8" stroke-linecap="round"/>
<text x="1086.00" y="364.60" font-size="10" font-weight="700" fill="#ffffff" text-anchor="middle" textLength="36.20" lengthAdjust="spacingAndGlyphs">switcher</text>
<path d="M1151.6 355.6L1162.4 366.4M1162.4 355.6L1151.6 366.4" stroke="#c6d0c0" stroke-width="2.1" fill="none"/>
<rect x="1015" y="380" width="77" height="19" rx="9.5" fill="#222222" stroke="#111111" stroke-width="1.3"/><text x="1023.40" y="394.04" font-size="10.4" font-weight="400" fill="#bebebe" textLength="28.49" lengthAdjust="spacingAndGlyphs">Switch</text><path d="M1079.9 387.0H1086.1L1083 392.6Z" fill="#bcbcbc"/>
<rect x="1093" y="380" width="64" height="19" rx="9.5" fill="#222222" stroke="#111111" stroke-width="1.3"/><text x="1100.60" y="394.04" font-size="10.4" font-weight="400" fill="#bebebe" textLength="5.38" lengthAdjust="spacingAndGlyphs">5</text><path d="M1144.3000000000002 387.0H1150.5L1147.4 392.6Z" fill="#bcbcbc"/>
<rect x="1013.6" y="405.2" width="145.2" height="69.4" fill="#0c0c0c"/>
<rect x="1015.2" y="407" width="28.5" height="66.6" fill="#5f624c"/><path d="M1015.7 407V473.6" stroke="#a3ab72" stroke-width="1"/>
<rect x="1043.7" y="407" width="28.5" height="66.6" fill="#51664c"/><path d="M1044.2 407V473.6" stroke="#8fc384" stroke-width="1"/>
<rect x="1072.2" y="407" width="28.5" height="66.6" fill="#4d655c"/><path d="M1072.7 407V473.6" stroke="#84c4a6" stroke-width="1"/>
<rect x="1100.7" y="407" width="28.5" height="66.6" fill="#4d5d64"/><path d="M1101.2 407V473.6" stroke="#86b6c6" stroke-width="1"/>
<rect x="1129.2" y="407" width="28.5" height="66.6" fill="#514f67"/><path d="M1129.7 407V473.6" stroke="#9494cc" stroke-width="1"/>
<path d="M1157.2 407V473.6" stroke="#9494cc" stroke-width="1"/><path d="M1015.2 473.2H1157.7" stroke="#a9cbe9" stroke-width="1.2"/>
<path d="M1022.7 490.4V501.6M1017.1 496H1028.3" stroke="#a6a6a6" stroke-width="2.2" fill="none"/>
<g fill="#9e9e9e"><path d="M1036 492.4H1044.6L1043.8 501.6H1036.8Z"/><rect x="1035.4" y="490.6" width="9.8" height="1.3"/><rect x="1038.4" y="489.6" width="3.8" height="1.2"/></g><path d="M1038.4 493.6V500.4M1040.3 493.6V500.4M1042.2 493.6V500.4" stroke="#363636" stroke-width="0.7"/>
<g fill="#9e9e9e"><path d="M1060.6 490.6L1063.6 494.8L1060.4 495.4L1061 493.6C1059 494 1058 495.2 1057.6 496.6L1055.8 496C1056.4 493.6 1058.2 492 1060.4 491.8Z"/><path d="M1056.6 501.6L1053.6 497.4L1056.8 496.8L1056.2 498.6C1058.2 498.2 1059.2 497 1059.6 495.6L1061.4 496.2C1060.8 498.6 1059 500.2 1056.8 500.4Z"/></g>
<circle cx="1028.40" cy="524" r="13.4" fill="#2f2f2f"/>
<g fill="none" stroke="#a3ab72"><circle cx="1028.40" cy="524" r="5.4" stroke-width="1.3" stroke-opacity="0.75" stroke-dasharray="6.6 1.88" stroke-dashoffset="3.3"/><path d="M1028.40 516V532M1020.40 524H1036.40" stroke-width="0.8" stroke-opacity="0.7"/></g>
<circle cx="1028.40" cy="524" r="2.6" fill="#353535" stroke="#d0d0d0" stroke-width="1.2"/>
<path d="M1027.00 539.4H1029.80" stroke="#a3ab72" stroke-width="0.9" stroke-opacity="0.8"/>
<circle cx="1057.33" cy="524" r="13.4" fill="#2f2f2f"/>
<g fill="none" stroke="#7fb877"><circle cx="1057.33" cy="524" r="5.4" stroke-width="1.3" stroke-opacity="0.75" stroke-dasharray="6.6 1.88" stroke-dashoffset="3.3"/><path d="M1057.33 516V532M1049.33 524H1065.33" stroke-width="0.8" stroke-opacity="0.7"/></g>
<circle cx="1057.33" cy="524" r="2.6" fill="#353535" stroke="#d0d0d0" stroke-width="1.2"/>
<path d="M1055.93 539.4H1058.73" stroke="#7fb877" stroke-width="0.9" stroke-opacity="0.8"/>
<circle cx="1086.26" cy="524" r="13.4" fill="#2f2f2f"/>
<g fill="none" stroke="#73b896"><circle cx="1086.26" cy="524" r="5.4" stroke-width="1.3" stroke-opacity="0.75" stroke-dasharray="6.6 1.88" stroke-dashoffset="3.3"/><path d="M1086.26 516V532M1078.26 524H1094.26" stroke-width="0.8" stroke-opacity="0.7"/></g>
<circle cx="1086.26" cy="524" r="2.6" fill="#353535" stroke="#d0d0d0" stroke-width="1.2"/>
<path d="M1084.86 539.4H1087.66" stroke="#73b896" stroke-width="0.9" stroke-opacity="0.8"/>
<circle cx="1115.19" cy="524" r="13.4" fill="#2f2f2f"/>
<g fill="none" stroke="#78a8b8"><circle cx="1115.19" cy="524" r="5.4" stroke-width="1.3" stroke-opacity="0.75" stroke-dasharray="6.6 1.88" stroke-dashoffset="3.3"/><path d="M1115.19 516V532M1107.19 524H1123.19" stroke-width="0.8" stroke-opacity="0.7"/></g>
<circle cx="1115.19" cy="524" r="2.6" fill="#353535" stroke="#d0d0d0" stroke-width="1.2"/>
<path d="M1113.79 539.4H1116.59" stroke="#78a8b8" stroke-width="0.9" stroke-opacity="0.8"/>
<circle cx="1144.12" cy="524" r="13.4" fill="#2f2f2f"/>
<g fill="none" stroke="#8c88c8"><circle cx="1144.12" cy="524" r="5.4" stroke-width="1.3" stroke-opacity="0.75" stroke-dasharray="6.6 1.88" stroke-dashoffset="3.3"/><path d="M1144.12 516V532M1136.12 524H1152.12" stroke-width="0.8" stroke-opacity="0.7"/></g>
<circle cx="1144.12" cy="524" r="2.6" fill="#353535" stroke="#d0d0d0" stroke-width="1.2"/>
<path d="M1142.72 539.4H1145.52" stroke="#8c88c8" stroke-width="0.9" stroke-opacity="0.8"/>
<path d="M1075.19 590.18A17.2 17.2 0 1 1 1097.31 590.18" fill="none" stroke="#101014" stroke-width="4.6"/><circle cx="1086.25" cy="577.4" r="12.5" fill="url(#kg)" stroke="#9c9c9c" stroke-width="3.5"/>
<text x="1086.25" y="603.82" font-size="10.6" font-weight="400" fill="#c4c4c4" text-anchor="middle" textLength="24.00" lengthAdjust="spacingAndGlyphs">Value</text>
<circle cx="1086.25" cy="609.4" r="2.8" fill="#353535" stroke="#e8e8e8" stroke-width="1.1"/>
<rect x="413" y="624" width="1346" height="304" fill="url(#gct)"/>
<path d="M495.4 644V927M503.5 644V927M511.7 644V927M519.9 644V927M648.3 644V927M656.4 644V927M664.6 644V927M672.8 644V927M801.2 644V927M809.3 644V927M817.5 644V927M825.6 644V927M954.1 644V927M962.2 644V927M970.4 644V927M978.5 644V927M1107.0 644V927M1115.2 644V927M1123.3 644V927M1131.5 644V927M1259.9 644V927M1268.1 644V927M1276.2 644V927M1284.4 644V927M1412.8 644V927M1421.0 644V927M1429.1 644V927M1437.3 644V927M1565.7 644V927M1573.9 644V927M1582.0 644V927M1590.2 644V927M1718.6 644V927M1726.8 644V927M1734.9 644V927M1743.1 644V927" stroke="#3a4432" stroke-width="0.8" fill="none" opacity="0.7"/>
<path d="M414.4 644V927H1758V644" fill="none" stroke="#586e48" stroke-width="1.5"/>
<rect x="413" y="624" width="1346" height="20" fill="#668056"/>
<path d="M426.06 630.26A4.7 4.7 0 1 1 420.94 630.26M423.5 628.80V634.80" fill="none" stroke="#6fd79c" stroke-width="1.8" stroke-linecap="round"/>
<g fill="none" stroke="#9cb48c" stroke-width="1.2"><circle cx="442.8" cy="634.2" r="5.2"/><path d="M443.0 634.6L439.6 636.8000000000001" stroke-width="1.5"/></g>
<text x="1086.00" y="637.80" font-size="10" font-weight="700" fill="#ffffff" text-anchor="middle" textLength="53.40" lengthAdjust="spacingAndGlyphs">sb_container</text>
<path d="M1743.3999999999999 629.1L1754.2 639.9M1754.2 629.1L1743.3999999999999 639.9" stroke="#c6d0c0" stroke-width="2.1" fill="none"/>
<g fill="none" stroke="#9a9a9a" stroke-width="1.5"><path d="M428.79999999999995 654.0H423.79999999999995V663.1999999999999H433.0V658.1999999999999"/><path d="M427.2 659.8L432.4 654.6" stroke-width="1.7"/><path d="M429.59999999999997 653.1999999999999H433.79999999999995V657.4Z" fill="#9a9a9a" stroke="none"/></g>
<path d="M1076.5 657.6H1096" stroke="#5f7a4c" stroke-width="1.4"/>
<circle cx="1076.5" cy="657.6" r="3" fill="#2b2e29" stroke="#b4b4b4" stroke-width="1.2"/>
<circle cx="1096" cy="657.6" r="3" fill="#2b2e29" stroke="#b4b4b4" stroke-width="1.2"/>
<path d="M1076.5 914H1096" stroke="#5f7a4c" stroke-width="1.4"/>
<circle cx="1076.5" cy="914" r="3" fill="#2b2e29" stroke="#b4b4b4" stroke-width="1.2"/>
<circle cx="1096" cy="914" r="3" fill="#2b2e29" stroke="#b4b4b4" stroke-width="1.2"/>
<path d="M1076.5 657.6L541.5 671M1096 657.6L561 671" stroke="#5a7348" stroke-width="1.3" fill="none"/>
<path d="M1076.5 914L1611 899.5M1096 914L1630.5 899.5" stroke="#5a7348" stroke-width="1.3" fill="none"/>
<path d="M681.5 785.5H689.0" stroke="#5d744c" stroke-width="1.4"/>
<path d="M948.9 785.5H956.4" stroke="#5d744c" stroke-width="1.4"/>
<path d="M1216.3 785.5H1223.8" stroke="#5d744c" stroke-width="1.4"/>
<path d="M1483.7 785.5H1491.2" stroke="#5d744c" stroke-width="1.4"/>
<rect x="421.0" y="671" width="260.5" height="228.6" fill="#232523"/>
<path d="M422.0 691V899H680.8V691" fill="none" stroke="#5f7a4e" stroke-width="1.2"/>
<rect x="421.0" y="671" width="260.5" height="20" fill="#668056"/>
<g fill="none" stroke="#8ca47c" stroke-width="1.2"><circle cx="451.0" cy="681.2" r="5.2"/><path d="M451.2 681.6L447.8 683.8000000000001" stroke-width="1.5"/></g>
<text x="551.25" y="685.20" font-size="10" font-weight="700" fill="#ffffff" text-anchor="middle" textLength="14.80" lengthAdjust="spacingAndGlyphs">sb1</text>
<path d="M666.6 676.1L677.4 686.9M677.4 676.1L666.6 686.9" stroke="#c6d0c0" stroke-width="2.1" fill="none"/>
<g fill="none" stroke="#9a9a9a" stroke-width="1.5"><path d="M436.59999999999997 700.6H431.59999999999997V709.8H440.8V704.8"/><path d="M435.0 706.4L440.2 701.2" stroke-width="1.7"/><path d="M437.4 699.8H441.59999999999997V704Z" fill="#9a9a9a" stroke="none"/></g>
<circle cx="541.5" cy="700.6" r="2.85" fill="none" stroke="#b0b0b0" stroke-width="1.25"/><path d="M541.5 700.2V718.5" stroke="#1f1f1f" stroke-width="3.2" stroke-opacity="0.9"/><path d="M541.5 699.6V718.5" stroke="#5c7e48" stroke-width="1.8"/>
<circle cx="541.5" cy="892" r="2.85" fill="none" stroke="#b0b0b0" stroke-width="1.25"/><path d="M541.5 873V892.4" stroke="#1f1f1f" stroke-width="3.2" stroke-opacity="0.9"/><path d="M541.5 873V893" stroke="#5c7e48" stroke-width="1.8"/>
<circle cx="561.0" cy="700.6" r="2.85" fill="none" stroke="#b0b0b0" stroke-width="1.25"/><path d="M561.0 700.2V718.5" stroke="#1f1f1f" stroke-width="3.2" stroke-opacity="0.9"/><path d="M561.0 699.6V718.5" stroke="#5c7e48" stroke-width="1.8"/>
<circle cx="561.0" cy="892" r="2.85" fill="none" stroke="#b0b0b0" stroke-width="1.25"/><path d="M561.0 873V892.4" stroke="#1f1f1f" stroke-width="3.2" stroke-opacity="0.9"/><path d="M561.0 873V893" stroke="#5c7e48" stroke-width="1.8"/>
<rect x="429.0" y="718" width="244" height="155" fill="url(#gmu)"/>
<path d="M430.0 738V872.4H672.2V738" fill="none" stroke="#3e3e3e" stroke-width="1.6"/>
<rect x="429.0" y="718" width="244" height="20" fill="#484848"/>
<path d="M442.16 724.06A4.7 4.7 0 1 1 437.04 724.06M439.6 722.60V728.60" fill="none" stroke="#6fd79c" stroke-width="1.8" stroke-linecap="round"/>
<g fill="none" stroke="#8a8a8a" stroke-width="1.2"><circle cx="459.0" cy="728" r="5.2"/><path d="M459.2 728.4L455.8 730.6" stroke-width="1.5"/></g>
<text x="551.25" y="731.60" font-size="10" font-weight="700" fill="#ffffff" text-anchor="middle" textLength="21.74" lengthAdjust="spacingAndGlyphs">multi</text>
<path d="M658.9 723.3L669.1 733.5M669.1 723.3L658.9 733.5" stroke="#b6b6b6" stroke-width="2.1" fill="none"/>
<g fill="none" stroke="#9a9a9a" stroke-width="1.5"><path d="M444.79999999999995 747.6H439.79999999999995V756.8H449.0V751.8"/><path d="M443.2 753.4L448.4 748.2" stroke-width="1.7"/><path d="M445.59999999999997 746.8H449.79999999999995V751Z" fill="#9a9a9a" stroke="none"/></g>
<circle cx="541.5" cy="751" r="3" fill="#242424" stroke="#ababab" stroke-width="1.2"/>
<circle cx="541.5" cy="859" r="3" fill="#242424" stroke="#ababab" stroke-width="1.2"/>
<circle cx="561.0" cy="751" r="3" fill="#242424" stroke="#ababab" stroke-width="1.2"/>
<circle cx="561.0" cy="859" r="3" fill="#242424" stroke="#ababab" stroke-width="1.2"/>
<path d="M541.5 751L478.0 765.4M561.0 751L606.0 765.6M541.5 859L478.0 844.6M561.0 859L606.0 844.4" stroke="#b8b8b8" stroke-width="1.5" fill="none"/>
<rect x="437.2" y="764" width="110.4" height="81.6" fill="url(#gnb)"/>
<rect x="438.2" y="765" width="108.4" height="79.6" fill="none" stroke="#4a4a4a" stroke-width="2"/>
<rect x="437.2" y="764" width="110.4" height="21" fill="#484848"/>
<path d="M439.2 785.6H545.6" stroke="#262626" stroke-width="1.2"/>
<path d="M450.56 771.06A4.7 4.7 0 1 1 445.44 771.06M448.0 769.60V775.60" fill="none" stroke="#6fd79c" stroke-width="1.8" stroke-linecap="round"/>
<text x="492.50" y="778.60" font-size="10" font-weight="700" fill="#ffffff" text-anchor="middle" textLength="32.40" lengthAdjust="spacingAndGlyphs">neural2</text>
<path d="M532.6999999999999 770.1L542.9 780.3000000000001M542.9 770.1L532.6999999999999 780.3000000000001" stroke="#b6b6b6" stroke-width="2.1" fill="none"/>
<rect x="446.2" y="795.7" width="93" height="18.8" rx="9.4" fill="#222222" stroke="#111111" stroke-width="1.3"/><text x="454.00" y="809.64" font-size="10.4" font-weight="400" fill="#bebebe" textLength="5.38" lengthAdjust="spacingAndGlyphs">0</text><path d="M526.5 802.6H532.7L529.6 808.2Z" fill="#bcbcbc"/>
<rect x="446.2" y="818.5" width="93" height="15" rx="7.5" fill="#222222" stroke="#111111" stroke-width="1.3"/><text x="454.20" y="830.54" font-size="10.4" font-weight="400" fill="#bebebe" textLength="19.89" lengthAdjust="spacingAndGlyphs">5 Hz</text><path d="M528.5 823.5H534.7L531.6 829.1Z" fill="#bcbcbc"/>
<rect x="554.9" y="764" width="110.4" height="81.6" fill="url(#gnb)"/>
<rect x="555.9" y="765" width="108.4" height="79.6" fill="none" stroke="#4a4a4a" stroke-width="2"/>
<rect x="554.9" y="764" width="110.4" height="21" fill="#484848"/>
<path d="M556.9 785.6H663.3" stroke="#262626" stroke-width="1.2"/>
<path d="M568.26 771.06A4.7 4.7 0 1 1 563.14 771.06M565.7 769.60V775.60" fill="none" stroke="#6fd79c" stroke-width="1.8" stroke-linecap="round"/>
<text x="610.20" y="778.60" font-size="10" font-weight="700" fill="#ffffff" text-anchor="middle" textLength="32.40" lengthAdjust="spacingAndGlyphs">neural2</text>
<path d="M650.4 770.1L660.6 780.3000000000001M660.6 770.1L650.4 780.3000000000001" stroke="#b6b6b6" stroke-width="2.1" fill="none"/>
<rect x="563.9" y="795.7" width="93" height="18.8" rx="9.4" fill="#222222" stroke="#111111" stroke-width="1.3"/><text x="571.70" y="809.64" font-size="10.4" font-weight="400" fill="#bebebe" textLength="5.38" lengthAdjust="spacingAndGlyphs">0</text><path d="M644.1999999999999 802.6H650.4L647.3 808.2Z" fill="#bcbcbc"/>
<rect x="563.9" y="818.5" width="93" height="15" rx="7.5" fill="#222222" stroke="#111111" stroke-width="1.3"/><text x="571.90" y="830.54" font-size="10.4" font-weight="400" fill="#bebebe" textLength="19.89" lengthAdjust="spacingAndGlyphs">5 Hz</text><path d="M646.1999999999999 823.5H652.4L649.3 829.1Z" fill="#bcbcbc"/>
<circle cx="431.0" cy="679.4" r="2.6" fill="#1c1c1c" stroke="#d8d8d8" stroke-width="1.1"/>
<rect x="688.4" y="671" width="260.5" height="228.6" fill="#232523"/>
<path d="M689.4 691V899H948.2V691" fill="none" stroke="#5f7a4e" stroke-width="1.2"/>
<rect x="688.4" y="671" width="260.5" height="20" fill="#668056"/>
<g fill="none" stroke="#8ca47c" stroke-width="1.2"><circle cx="718.4" cy="681.2" r="5.2"/><path d="M718.6 681.6L715.1999999999999 683.8000000000001" stroke-width="1.5"/></g>
<text x="818.65" y="685.20" font-size="10" font-weight="400" fill="#bccab4" text-anchor="middle" textLength="14.20" lengthAdjust="spacingAndGlyphs">sb2</text>
<path d="M934.0 676.1L944.8 686.9M944.8 676.1L934.0 686.9" stroke="#c6d0c0" stroke-width="2.1" fill="none"/>
<g fill="none" stroke="#9a9a9a" stroke-width="1.5"><path d="M704.0 700.6H699.0V709.8H708.2V704.8"/><path d="M702.4 706.4L707.6 701.2" stroke-width="1.7"/><path d="M704.8000000000001 699.8H709.0V704Z" fill="#9a9a9a" stroke="none"/></g>
<circle cx="808.9" cy="700.6" r="2.85" fill="none" stroke="#b0b0b0" stroke-width="1.25"/><path d="M808.9 700.2V718.5" stroke="#1f1f1f" stroke-width="3.2" stroke-opacity="0.9"/><path d="M808.9 699.6V718.5" stroke="#5c7e48" stroke-width="1.8"/>
<circle cx="808.9" cy="892" r="2.85" fill="none" stroke="#b0b0b0" stroke-width="1.25"/><path d="M808.9 873V892.4" stroke="#1f1f1f" stroke-width="3.2" stroke-opacity="0.9"/><path d="M808.9 873V893" stroke="#5c7e48" stroke-width="1.8"/>
<circle cx="828.4" cy="700.6" r="2.85" fill="none" stroke="#b0b0b0" stroke-width="1.25"/><path d="M828.4 700.2V718.5" stroke="#1f1f1f" stroke-width="3.2" stroke-opacity="0.9"/><path d="M828.4 699.6V718.5" stroke="#5c7e48" stroke-width="1.8"/>
<circle cx="828.4" cy="892" r="2.85" fill="none" stroke="#b0b0b0" stroke-width="1.25"/><path d="M828.4 873V892.4" stroke="#1f1f1f" stroke-width="3.2" stroke-opacity="0.9"/><path d="M828.4 873V893" stroke="#5c7e48" stroke-width="1.8"/>
<rect x="696.4" y="718" width="244" height="155" fill="url(#gmu)"/>
<path d="M697.4 738V872.4H939.6V738" fill="none" stroke="#3e3e3e" stroke-width="1.6"/>
<rect x="696.4" y="718" width="244" height="20" fill="#484848"/>
<path d="M709.56 724.06A4.7 4.7 0 1 1 704.44 724.06M707.0 722.60V728.60" fill="none" stroke="#6fd79c" stroke-width="1.8" stroke-linecap="round"/>
<g fill="none" stroke="#8a8a8a" stroke-width="1.2"><circle cx="726.4" cy="728" r="5.2"/><path d="M726.6 728.4L723.1999999999999 730.6" stroke-width="1.5"/></g>
<text x="818.65" y="731.60" font-size="10" font-weight="700" fill="#ffffff" text-anchor="middle" textLength="26.80" lengthAdjust="spacingAndGlyphs">multi1</text>
<path d="M926.3 723.3L936.5 733.5M936.5 723.3L926.3 733.5" stroke="#b6b6b6" stroke-width="2.1" fill="none"/>
<g fill="none" stroke="#9a9a9a" stroke-width="1.5"><path d="M712.1999999999999 747.6H707.1999999999999V756.8H716.4V751.8"/><path d="M710.5999999999999 753.4L715.8 748.2" stroke-width="1.7"/><path d="M713.0 746.8H717.1999999999999V751Z" fill="#9a9a9a" stroke="none"/></g>
<circle cx="808.9" cy="751" r="3" fill="#242424" stroke="#ababab" stroke-width="1.2"/>
<circle cx="808.9" cy="859" r="3" fill="#242424" stroke="#ababab" stroke-width="1.2"/>
<circle cx="828.4" cy="751" r="3" fill="#242424" stroke="#ababab" stroke-width="1.2"/>
<circle cx="828.4" cy="859" r="3" fill="#242424" stroke="#ababab" stroke-width="1.2"/>
<path d="M808.9 751L745.4 765.4M828.4 751L873.4 765.6M808.9 859L745.4 844.6M828.4 859L873.4 844.4" stroke="#b8b8b8" stroke-width="1.5" fill="none"/>
<rect x="704.6" y="764" width="110.4" height="81.6" fill="url(#gnb)"/>
<rect x="705.6" y="765" width="108.4" height="79.6" fill="none" stroke="#4a4a4a" stroke-width="2"/>
<rect x="704.6" y="764" width="110.4" height="21" fill="#484848"/>
<path d="M706.6 785.6H813.0" stroke="#262626" stroke-width="1.2"/>
<path d="M717.96 771.06A4.7 4.7 0 1 1 712.84 771.06M715.4 769.60V775.60" fill="none" stroke="#6fd79c" stroke-width="1.8" stroke-linecap="round"/>
<text x="759.90" y="778.60" font-size="10" font-weight="700" fill="#ffffff" text-anchor="middle" textLength="32.40" lengthAdjust="spacingAndGlyphs">neural3</text>
<path d="M800.1 770.1L810.3000000000001 780.3000000000001M810.3000000000001 770.1L800.1 780.3000000000001" stroke="#b6b6b6" stroke-width="2.1" fill="none"/>
<rect x="713.6" y="795.7" width="93" height="18.8" rx="9.4" fill="#222222" stroke="#111111" stroke-width="1.3"/><text x="721.40" y="809.64" font-size="10.4" font-weight="400" fill="#bebebe" textLength="10.76" lengthAdjust="spacingAndGlyphs">20</text><path d="M793.9 802.6H800.1L797.0 808.2Z" fill="#bcbcbc"/>
<rect x="713.6" y="818.5" width="93" height="15" rx="7.5" fill="#222222" stroke="#111111" stroke-width="1.3"/><text x="721.60" y="830.54" font-size="10.4" font-weight="400" fill="#bebebe" textLength="19.89" lengthAdjust="spacingAndGlyphs">5 Hz</text><path d="M795.9 823.5H802.1L799.0 829.1Z" fill="#bcbcbc"/>
<rect x="822.3" y="764" width="110.4" height="81.6" fill="url(#gnb)"/>
<rect x="823.3" y="765" width="108.4" height="79.6" fill="none" stroke="#4a4a4a" stroke-width="2"/>
<rect x="822.3" y="764" width="110.4" height="21" fill="#484848"/>
<path d="M824.3 785.6H930.7" stroke="#262626" stroke-width="1.2"/>
<path d="M835.66 771.06A4.7 4.7 0 1 1 830.54 771.06M833.1 769.60V775.60" fill="none" stroke="#6fd79c" stroke-width="1.8" stroke-linecap="round"/>
<text x="877.60" y="778.60" font-size="10" font-weight="700" fill="#ffffff" text-anchor="middle" textLength="32.40" lengthAdjust="spacingAndGlyphs">neural3</text>
<path d="M917.8 770.1L928.0 780.3000000000001M928.0 770.1L917.8 780.3000000000001" stroke="#b6b6b6" stroke-width="2.1" fill="none"/>
<rect x="831.3" y="795.7" width="93" height="18.8" rx="9.4" fill="#222222" stroke="#111111" stroke-width="1.3"/><text x="839.10" y="809.64" font-size="10.4" font-weight="400" fill="#bebebe" textLength="10.76" lengthAdjust="spacingAndGlyphs">20</text><path d="M911.6 802.6H917.8000000000001L914.7 808.2Z" fill="#bcbcbc"/>
<rect x="831.3" y="818.5" width="93" height="15" rx="7.5" fill="#222222" stroke="#111111" stroke-width="1.3"/><text x="839.30" y="830.54" font-size="10.4" font-weight="400" fill="#bebebe" textLength="19.89" lengthAdjust="spacingAndGlyphs">5 Hz</text><path d="M913.6 823.5H919.8000000000001L916.7 829.1Z" fill="#bcbcbc"/>
<circle cx="698.4" cy="679.4" r="2.6" fill="#1c1c1c" stroke="#d8d8d8" stroke-width="1.1"/>
<rect x="955.8" y="671" width="260.5" height="228.6" fill="#232523"/>
<path d="M956.8 691V899H1215.6V691" fill="none" stroke="#5f7a4e" stroke-width="1.2"/>
<rect x="955.8" y="671" width="260.5" height="20" fill="#668056"/>
<g fill="none" stroke="#8ca47c" stroke-width="1.2"><circle cx="985.8" cy="681.2" r="5.2"/><path d="M986.0 681.6L982.5999999999999 683.8000000000001" stroke-width="1.5"/></g>
<text x="1086.05" y="685.20" font-size="10" font-weight="400" fill="#bccab4" text-anchor="middle" textLength="14.20" lengthAdjust="spacingAndGlyphs">sb3</text>
<path d="M1201.3999999999999 676.1L1212.2 686.9M1212.2 676.1L1201.3999999999999 686.9" stroke="#c6d0c0" stroke-width="2.1" fill="none"/>
<g fill="none" stroke="#9a9a9a" stroke-width="1.5"><path d="M971.4 700.6H966.4V709.8H975.6V704.8"/><path d="M969.8 706.4L975.0 701.2" stroke-width="1.7"/><path d="M972.2 699.8H976.4V704Z" fill="#9a9a9a" stroke="none"/></g>
<circle cx="1076.3" cy="700.6" r="2.85" fill="none" stroke="#b0b0b0" stroke-width="1.25"/><path d="M1076.3 700.2V718.5" stroke="#1f1f1f" stroke-width="3.2" stroke-opacity="0.9"/><path d="M1076.3 699.6V718.5" stroke="#5c7e48" stroke-width="1.8"/>
<circle cx="1076.3" cy="892" r="2.85" fill="none" stroke="#b0b0b0" stroke-width="1.25"/><path d="M1076.3 873V892.4" stroke="#1f1f1f" stroke-width="3.2" stroke-opacity="0.9"/><path d="M1076.3 873V893" stroke="#5c7e48" stroke-width="1.8"/>
<circle cx="1095.8" cy="700.6" r="2.85" fill="none" stroke="#b0b0b0" stroke-width="1.25"/><path d="M1095.8 700.2V718.5" stroke="#1f1f1f" stroke-width="3.2" stroke-opacity="0.9"/><path d="M1095.8 699.6V718.5" stroke="#5c7e48" stroke-width="1.8"/>
<circle cx="1095.8" cy="892" r="2.85" fill="none" stroke="#b0b0b0" stroke-width="1.25"/><path d="M1095.8 873V892.4" stroke="#1f1f1f" stroke-width="3.2" stroke-opacity="0.9"/><path d="M1095.8 873V893" stroke="#5c7e48" stroke-width="1.8"/>
<rect x="963.8" y="718" width="244" height="155" fill="url(#gmu)"/>
<path d="M964.8 738V872.4H1207.0V738" fill="none" stroke="#3e3e3e" stroke-width="1.6"/>
<rect x="963.8" y="718" width="244" height="20" fill="#484848"/>
<path d="M976.96 724.06A4.7 4.7 0 1 1 971.84 724.06M974.4 722.60V728.60" fill="none" stroke="#6fd79c" stroke-width="1.8" stroke-linecap="round"/>
<g fill="none" stroke="#8a8a8a" stroke-width="1.2"><circle cx="993.8" cy="728" r="5.2"/><path d="M994.0 728.4L990.5999999999999 730.6" stroke-width="1.5"/></g>
<text x="1086.05" y="731.60" font-size="10" font-weight="700" fill="#ffffff" text-anchor="middle" textLength="26.80" lengthAdjust="spacingAndGlyphs">multi2</text>
<path d="M1193.7 723.3L1203.8999999999999 733.5M1203.8999999999999 723.3L1193.7 733.5" stroke="#b6b6b6" stroke-width="2.1" fill="none"/>
<g fill="none" stroke="#9a9a9a" stroke-width="1.5"><path d="M979.6 747.6H974.6V756.8H983.8000000000001V751.8"/><path d="M978.0 753.4L983.2 748.2" stroke-width="1.7"/><path d="M980.4000000000001 746.8H984.6V751Z" fill="#9a9a9a" stroke="none"/></g>
<circle cx="1076.3" cy="751" r="3" fill="#242424" stroke="#ababab" stroke-width="1.2"/>
<circle cx="1076.3" cy="859" r="3" fill="#242424" stroke="#ababab" stroke-width="1.2"/>
<circle cx="1095.8" cy="751" r="3" fill="#242424" stroke="#ababab" stroke-width="1.2"/>
<circle cx="1095.8" cy="859" r="3" fill="#242424" stroke="#ababab" stroke-width="1.2"/>
<path d="M1076.3 751L1012.8 765.4M1095.8 751L1140.8 765.6M1076.3 859L1012.8 844.6M1095.8 859L1140.8 844.4" stroke="#b8b8b8" stroke-width="1.5" fill="none"/>
<rect x="972.0" y="764" width="110.4" height="81.6" fill="url(#gnb)"/>
<rect x="973.0" y="765" width="108.4" height="79.6" fill="none" stroke="#4a4a4a" stroke-width="2"/>
<rect x="972.0" y="764" width="110.4" height="21" fill="#484848"/>
<path d="M974.0 785.6H1080.4" stroke="#262626" stroke-width="1.2"/>
<path d="M985.36 771.06A4.7 4.7 0 1 1 980.24 771.06M982.8 769.60V775.60" fill="none" stroke="#6fd79c" stroke-width="1.8" stroke-linecap="round"/>
<text x="1027.30" y="778.60" font-size="10" font-weight="700" fill="#ffffff" text-anchor="middle" textLength="32.40" lengthAdjust="spacingAndGlyphs">neural3</text>
<path d="M1067.5 770.1L1077.6999999999998 780.3000000000001M1077.6999999999998 770.1L1067.5 780.3000000000001" stroke="#b6b6b6" stroke-width="2.1" fill="none"/>
<rect x="981.0" y="795.7" width="93" height="18.8" rx="9.4" fill="#222222" stroke="#111111" stroke-width="1.3"/><text x="988.80" y="809.64" font-size="10.4" font-weight="400" fill="#bebebe" textLength="10.76" lengthAdjust="spacingAndGlyphs">50</text><path d="M1061.3000000000002 802.6H1067.5L1064.4 808.2Z" fill="#bcbcbc"/>
<rect x="981.0" y="818.5" width="93" height="15" rx="7.5" fill="#222222" stroke="#111111" stroke-width="1.3"/><text x="989.00" y="830.54" font-size="10.4" font-weight="400" fill="#bebebe" textLength="19.89" lengthAdjust="spacingAndGlyphs">5 Hz</text><path d="M1063.3000000000002 823.5H1069.5L1066.4 829.1Z" fill="#bcbcbc"/>
<rect x="1089.7" y="764" width="110.4" height="81.6" fill="url(#gnb)"/>
<rect x="1090.7" y="765" width="108.4" height="79.6" fill="none" stroke="#4a4a4a" stroke-width="2"/>
<rect x="1089.7" y="764" width="110.4" height="21" fill="#484848"/>
<path d="M1091.7 785.6H1198.1" stroke="#262626" stroke-width="1.2"/>
<path d="M1103.06 771.06A4.7 4.7 0 1 1 1097.94 771.06M1100.5 769.60V775.60" fill="none" stroke="#6fd79c" stroke-width="1.8" stroke-linecap="round"/>
<text x="1145.00" y="778.60" font-size="10" font-weight="700" fill="#ffffff" text-anchor="middle" textLength="32.40" lengthAdjust="spacingAndGlyphs">neural3</text>
<path d="M1185.2 770.1L1195.3999999999999 780.3000000000001M1195.3999999999999 770.1L1185.2 780.3000000000001" stroke="#b6b6b6" stroke-width="2.1" fill="none"/>
<rect x="1098.7" y="795.7" width="93" height="18.8" rx="9.4" fill="#222222" stroke="#111111" stroke-width="1.3"/><text x="1106.50" y="809.64" font-size="10.4" font-weight="400" fill="#bebebe" textLength="10.76" lengthAdjust="spacingAndGlyphs">50</text><path d="M1179.0 802.6H1185.1999999999998L1182.1 808.2Z" fill="#bcbcbc"/>
<rect x="1098.7" y="818.5" width="93" height="15" rx="7.5" fill="#222222" stroke="#111111" stroke-width="1.3"/><text x="1106.70" y="830.54" font-size="10.4" font-weight="400" fill="#bebebe" textLength="19.89" lengthAdjust="spacingAndGlyphs">5 Hz</text><path d="M1181.0 823.5H1187.1999999999998L1184.1 829.1Z" fill="#bcbcbc"/>
<circle cx="965.8" cy="679.4" r="2.6" fill="#1c1c1c" stroke="#d8d8d8" stroke-width="1.1"/>
<rect x="1223.2" y="671" width="260.5" height="228.6" fill="#232523"/>
<path d="M1224.2 691V899H1483.0V691" fill="none" stroke="#5f7a4e" stroke-width="1.2"/>
<rect x="1223.2" y="671" width="260.5" height="20" fill="#668056"/>
<g fill="none" stroke="#8ca47c" stroke-width="1.2"><circle cx="1253.2" cy="681.2" r="5.2"/><path d="M1253.4 681.6L1250.0 683.8000000000001" stroke-width="1.5"/></g>
<text x="1353.45" y="685.20" font-size="10" font-weight="400" fill="#bccab4" text-anchor="middle" textLength="14.20" lengthAdjust="spacingAndGlyphs">sb4</text>
<path d="M1468.8 676.1L1479.6000000000001 686.9M1479.6000000000001 676.1L1468.8 686.9" stroke="#c6d0c0" stroke-width="2.1" fill="none"/>
<g fill="none" stroke="#9a9a9a" stroke-width="1.5"><path d="M1238.8000000000002 700.6H1233.8000000000002V709.8H1243.0V704.8"/><path d="M1237.2 706.4L1242.4 701.2" stroke-width="1.7"/><path d="M1239.6000000000001 699.8H1243.8000000000002V704Z" fill="#9a9a9a" stroke="none"/></g>
<circle cx="1343.7" cy="700.6" r="2.85" fill="none" stroke="#b0b0b0" stroke-width="1.25"/><path d="M1343.7 700.2V718.5" stroke="#1f1f1f" stroke-width="3.2" stroke-opacity="0.9"/><path d="M1343.7 699.6V718.5" stroke="#5c7e48" stroke-width="1.8"/>
<circle cx="1343.7" cy="892" r="2.85" fill="none" stroke="#b0b0b0" stroke-width="1.25"/><path d="M1343.7 873V892.4" stroke="#1f1f1f" stroke-width="3.2" stroke-opacity="0.9"/><path d="M1343.7 873V893" stroke="#5c7e48" stroke-width="1.8"/>
<circle cx="1363.2" cy="700.6" r="2.85" fill="none" stroke="#b0b0b0" stroke-width="1.25"/><path d="M1363.2 700.2V718.5" stroke="#1f1f1f" stroke-width="3.2" stroke-opacity="0.9"/><path d="M1363.2 699.6V718.5" stroke="#5c7e48" stroke-width="1.8"/>
<circle cx="1363.2" cy="892" r="2.85" fill="none" stroke="#b0b0b0" stroke-width="1.25"/><path d="M1363.2 873V892.4" stroke="#1f1f1f" stroke-width="3.2" stroke-opacity="0.9"/><path d="M1363.2 873V893" stroke="#5c7e48" stroke-width="1.8"/>
<rect x="1231.2" y="718" width="244" height="155" fill="url(#gmu)"/>
<path d="M1232.2 738V872.4H1474.4V738" fill="none" stroke="#3e3e3e" stroke-width="1.6"/>
<rect x="1231.2" y="718" width="244" height="20" fill="#484848"/>
<path d="M1244.36 724.06A4.7 4.7 0 1 1 1239.24 724.06M1241.8 722.60V728.60" fill="none" stroke="#6fd79c" stroke-width="1.8" stroke-linecap="round"/>
<g fill="none" stroke="#8a8a8a" stroke-width="1.2"><circle cx="1261.2" cy="728" r="5.2"/><path d="M1261.4 728.4L1258.0 730.6" stroke-width="1.5"/></g>
<text x="1353.45" y="731.60" font-size="10" font-weight="700" fill="#ffffff" text-anchor="middle" textLength="26.80" lengthAdjust="spacingAndGlyphs">multi3</text>
<path d="M1461.1000000000001 723.3L1471.3 733.5M1471.3 723.3L1461.1000000000001 733.5" stroke="#b6b6b6" stroke-width="2.1" fill="none"/>
<g fill="none" stroke="#9a9a9a" stroke-width="1.5"><path d="M1247.0 747.6H1242.0V756.8H1251.1999999999998V751.8"/><path d="M1245.3999999999999 753.4L1250.6 748.2" stroke-width="1.7"/><path d="M1247.8 746.8H1252.0V751Z" fill="#9a9a9a" stroke="none"/></g>
<circle cx="1343.7" cy="751" r="3" fill="#242424" stroke="#ababab" stroke-width="1.2"/>
<circle cx="1343.7" cy="859" r="3" fill="#242424" stroke="#ababab" stroke-width="1.2"/>
<circle cx="1363.2" cy="751" r="3" fill="#242424" stroke="#ababab" stroke-width="1.2"/>
<circle cx="1363.2" cy="859" r="3" fill="#242424" stroke="#ababab" stroke-width="1.2"/>
<path d="M1343.7 751L1280.2 765.4M1363.2 751L1408.2 765.6M1343.7 859L1280.2 844.6M1363.2 859L1408.2 844.4" stroke="#b8b8b8" stroke-width="1.5" fill="none"/>
<rect x="1239.4" y="764" width="110.4" height="81.6" fill="url(#gnb)"/>
<rect x="1240.4" y="765" width="108.4" height="79.6" fill="none" stroke="#4a4a4a" stroke-width="2"/>
<rect x="1239.4" y="764" width="110.4" height="21" fill="#484848"/>
<path d="M1241.4 785.6H1347.8" stroke="#262626" stroke-width="1.2"/>
<path d="M1252.76 771.06A4.7 4.7 0 1 1 1247.64 771.06M1250.2 769.60V775.60" fill="none" stroke="#6fd79c" stroke-width="1.8" stroke-linecap="round"/>
<text x="1294.70" y="778.60" font-size="10" font-weight="700" fill="#ffffff" text-anchor="middle" textLength="32.40" lengthAdjust="spacingAndGlyphs">neural3</text>
<path d="M1334.9 770.1L1345.1 780.3000000000001M1345.1 770.1L1334.9 780.3000000000001" stroke="#b6b6b6" stroke-width="2.1" fill="none"/>
<rect x="1248.4" y="795.7" width="93" height="18.8" rx="9.4" fill="#222222" stroke="#111111" stroke-width="1.3"/><text x="1256.20" y="809.64" font-size="10.4" font-weight="400" fill="#bebebe" textLength="10.76" lengthAdjust="spacingAndGlyphs">70</text><path d="M1328.7 802.6H1334.8999999999999L1331.8 808.2Z" fill="#bcbcbc"/>
<rect x="1248.4" y="818.5" width="93" height="15" rx="7.5" fill="#222222" stroke="#111111" stroke-width="1.3"/><text x="1256.40" y="830.54" font-size="10.4" font-weight="400" fill="#bebebe" textLength="19.89" lengthAdjust="spacingAndGlyphs">5 Hz</text><path d="M1330.7 823.5H1336.8999999999999L1333.8 829.1Z" fill="#bcbcbc"/>
<rect x="1357.1" y="764" width="110.4" height="81.6" fill="url(#gnb)"/>
<rect x="1358.1" y="765" width="108.4" height="79.6" fill="none" stroke="#4a4a4a" stroke-width="2"/>
<rect x="1357.1" y="764" width="110.4" height="21" fill="#484848"/>
<path d="M1359.1 785.6H1465.5" stroke="#262626" stroke-width="1.2"/>
<path d="M1370.46 771.06A4.7 4.7 0 1 1 1365.34 771.06M1367.9 769.60V775.60" fill="none" stroke="#6fd79c" stroke-width="1.8" stroke-linecap="round"/>
<text x="1412.40" y="778.60" font-size="10" font-weight="700" fill="#ffffff" text-anchor="middle" textLength="32.40" lengthAdjust="spacingAndGlyphs">neural3</text>
<path d="M1452.6000000000001 770.1L1462.8 780.3000000000001M1462.8 770.1L1452.6000000000001 780.3000000000001" stroke="#b6b6b6" stroke-width="2.1" fill="none"/>
<rect x="1366.1" y="795.7" width="93" height="18.8" rx="9.4" fill="#222222" stroke="#111111" stroke-width="1.3"/><text x="1373.90" y="809.64" font-size="10.4" font-weight="400" fill="#bebebe" textLength="10.76" lengthAdjust="spacingAndGlyphs">70</text><path d="M1446.4 802.6H1452.6L1449.5 808.2Z" fill="#bcbcbc"/>
<rect x="1366.1" y="818.5" width="93" height="15" rx="7.5" fill="#222222" stroke="#111111" stroke-width="1.3"/><text x="1374.10" y="830.54" font-size="10.4" font-weight="400" fill="#bebebe" textLength="19.89" lengthAdjust="spacingAndGlyphs">5 Hz</text><path d="M1448.4 823.5H1454.6L1451.5 829.1Z" fill="#bcbcbc"/>
<circle cx="1233.2" cy="679.4" r="2.6" fill="#1c1c1c" stroke="#d8d8d8" stroke-width="1.1"/>
<rect x="1490.6" y="671" width="260.5" height="228.6" fill="#232523"/>
<path d="M1491.6 691V899H1750.4V691" fill="none" stroke="#5f7a4e" stroke-width="1.2"/>
<rect x="1490.6" y="671" width="260.5" height="20" fill="#668056"/>
<g fill="none" stroke="#8ca47c" stroke-width="1.2"><circle cx="1520.6" cy="681.2" r="5.2"/><path d="M1520.8 681.6L1517.3999999999999 683.8000000000001" stroke-width="1.5"/></g>
<text x="1620.85" y="685.20" font-size="10" font-weight="400" fill="#bccab4" text-anchor="middle" textLength="14.20" lengthAdjust="spacingAndGlyphs">sb5</text>
<path d="M1736.1999999999998 676.1L1747.0 686.9M1747.0 676.1L1736.1999999999998 686.9" stroke="#c6d0c0" stroke-width="2.1" fill="none"/>
<g fill="none" stroke="#9a9a9a" stroke-width="1.5"><path d="M1506.2 700.6H1501.2V709.8H1510.3999999999999V704.8"/><path d="M1504.6 706.4L1509.8 701.2" stroke-width="1.7"/><path d="M1507.0 699.8H1511.2V704Z" fill="#9a9a9a" stroke="none"/></g>
<circle cx="1611.1" cy="700.6" r="2.85" fill="none" stroke="#b0b0b0" stroke-width="1.25"/><path d="M1611.1 700.2V718.5" stroke="#1f1f1f" stroke-width="3.2" stroke-opacity="0.9"/><path d="M1611.1 699.6V718.5" stroke="#5c7e48" stroke-width="1.8"/>
<circle cx="1611.1" cy="892" r="2.85" fill="none" stroke="#b0b0b0" stroke-width="1.25"/><path d="M1611.1 873V892.4" stroke="#1f1f1f" stroke-width="3.2" stroke-opacity="0.9"/><path d="M1611.1 873V893" stroke="#5c7e48" stroke-width="1.8"/>
<circle cx="1630.6" cy="700.6" r="2.85" fill="none" stroke="#b0b0b0" stroke-width="1.25"/><path d="M1630.6 700.2V718.5" stroke="#1f1f1f" stroke-width="3.2" stroke-opacity="0.9"/><path d="M1630.6 699.6V718.5" stroke="#5c7e48" stroke-width="1.8"/>
<circle cx="1630.6" cy="892" r="2.85" fill="none" stroke="#b0b0b0" stroke-width="1.25"/><path d="M1630.6 873V892.4" stroke="#1f1f1f" stroke-width="3.2" stroke-opacity="0.9"/><path d="M1630.6 873V893" stroke="#5c7e48" stroke-width="1.8"/>
<rect x="1498.6" y="718" width="244" height="155" fill="url(#gmu)"/>
<path d="M1499.6 738V872.4H1741.8V738" fill="none" stroke="#3e3e3e" stroke-width="1.6"/>
<rect x="1498.6" y="718" width="244" height="20" fill="#484848"/>
<path d="M1511.76 724.06A4.7 4.7 0 1 1 1506.64 724.06M1509.2 722.60V728.60" fill="none" stroke="#6fd79c" stroke-width="1.8" stroke-linecap="round"/>
<g fill="none" stroke="#8a8a8a" stroke-width="1.2"><circle cx="1528.6" cy="728" r="5.2"/><path d="M1528.8 728.4L1525.3999999999999 730.6" stroke-width="1.5"/></g>
<text x="1620.85" y="731.60" font-size="10" font-weight="700" fill="#ffffff" text-anchor="middle" textLength="26.80" lengthAdjust="spacingAndGlyphs">multi4</text>
<path d="M1728.5 723.3L1738.6999999999998 733.5M1738.6999999999998 723.3L1728.5 733.5" stroke="#b6b6b6" stroke-width="2.1" fill="none"/>
<g fill="none" stroke="#9a9a9a" stroke-width="1.5"><path d="M1514.4 747.6H1509.4V756.8H1518.6V751.8"/><path d="M1512.8 753.4L1518.0 748.2" stroke-width="1.7"/><path d="M1515.2 746.8H1519.4V751Z" fill="#9a9a9a" stroke="none"/></g>
<circle cx="1611.1" cy="751" r="3" fill="#242424" stroke="#ababab" stroke-width="1.2"/>
<circle cx="1611.1" cy="859" r="3" fill="#242424" stroke="#ababab" stroke-width="1.2"/>
<circle cx="1630.6" cy="751" r="3" fill="#242424" stroke="#ababab" stroke-width="1.2"/>
<circle cx="1630.6" cy="859" r="3" fill="#242424" stroke="#ababab" stroke-width="1.2"/>
<path d="M1611.1 751L1547.6 765.4M1630.6 751L1675.6 765.6M1611.1 859L1547.6 844.6M1630.6 859L1675.6 844.4" stroke="#b8b8b8" stroke-width="1.5" fill="none"/>
<rect x="1506.8" y="764" width="110.4" height="81.6" fill="url(#gnb)"/>
<rect x="1507.8" y="765" width="108.4" height="79.6" fill="none" stroke="#4a4a4a" stroke-width="2"/>
<rect x="1506.8" y="764" width="110.4" height="21" fill="#484848"/>
<path d="M1508.8 785.6H1615.2" stroke="#262626" stroke-width="1.2"/>
<path d="M1520.16 771.06A4.7 4.7 0 1 1 1515.04 771.06M1517.6 769.60V775.60" fill="none" stroke="#6fd79c" stroke-width="1.8" stroke-linecap="round"/>
<text x="1562.10" y="778.60" font-size="10" font-weight="700" fill="#ffffff" text-anchor="middle" textLength="32.40" lengthAdjust="spacingAndGlyphs">neural3</text>
<path d="M1602.3000000000002 770.1L1612.5 780.3000000000001M1612.5 770.1L1602.3000000000002 780.3000000000001" stroke="#b6b6b6" stroke-width="2.1" fill="none"/>
<rect x="1515.8" y="795.7" width="93" height="18.8" rx="9.4" fill="#222222" stroke="#111111" stroke-width="1.3"/><text x="1523.60" y="809.64" font-size="10.4" font-weight="400" fill="#bebebe" textLength="16.14" lengthAdjust="spacingAndGlyphs">100</text><path d="M1596.1000000000001 802.6H1602.3L1599.2 808.2Z" fill="#bcbcbc"/>
<rect x="1515.8" y="818.5" width="93" height="15" rx="7.5" fill="#222222" stroke="#111111" stroke-width="1.3"/><text x="1523.80" y="830.54" font-size="10.4" font-weight="400" fill="#bebebe" textLength="19.89" lengthAdjust="spacingAndGlyphs">5 Hz</text><path d="M1598.1000000000001 823.5H1604.3L1601.2 829.1Z" fill="#bcbcbc"/>
<rect x="1624.5" y="764" width="110.4" height="81.6" fill="url(#gnb)"/>
<rect x="1625.5" y="765" width="108.4" height="79.6" fill="none" stroke="#4a4a4a" stroke-width="2"/>
<rect x="1624.5" y="764" width="110.4" height="21" fill="#484848"/>
<path d="M1626.5 785.6H1732.9" stroke="#262626" stroke-width="1.2"/>
<path d="M1637.86 771.06A4.7 4.7 0 1 1 1632.74 771.06M1635.3 769.60V775.60" fill="none" stroke="#6fd79c" stroke-width="1.8" stroke-linecap="round"/>
<text x="1679.80" y="778.60" font-size="10" font-weight="700" fill="#ffffff" text-anchor="middle" textLength="32.40" lengthAdjust="spacingAndGlyphs">neural3</text>
<path d="M1720.0 770.1L1730.1999999999998 780.3000000000001M1730.1999999999998 770.1L1720.0 780.3000000000001" stroke="#b6b6b6" stroke-width="2.1" fill="none"/>
<rect x="1633.5" y="795.7" width="93" height="18.8" rx="9.4" fill="#222222" stroke="#111111" stroke-width="1.3"/><text x="1641.30" y="809.64" font-size="10.4" font-weight="400" fill="#bebebe" textLength="16.14" lengthAdjust="spacingAndGlyphs">100</text><path d="M1713.8000000000002 802.6H1720.0L1716.9 808.2Z" fill="#bcbcbc"/>
<rect x="1633.5" y="818.5" width="93" height="15" rx="7.5" fill="#222222" stroke="#111111" stroke-width="1.3"/><text x="1641.50" y="830.54" font-size="10.4" font-weight="400" fill="#bebebe" textLength="19.89" lengthAdjust="spacingAndGlyphs">5 Hz</text><path d="M1715.8000000000002 823.5H1722.0L1718.9 829.1Z" fill="#bcbcbc"/>
<circle cx="1500.6" cy="679.4" r="2.6" fill="#1c1c1c" stroke="#d8d8d8" stroke-width="1.1"/>
<g fill="none" stroke-linecap="round">
<path d="M471.5 267.4C575.1 403.7 796.9 682 1086.25 609.4" stroke="#729f58" stroke-width="1.3"/>
<path d="M1028.4 524C859.2 659.6 623.9 739.4 431 679.4" stroke="#1c241e" stroke-width="3" stroke-opacity="0.7"/>
<path d="M1028.4 524C859.2 659.6 623.9 739.4 431 679.4" stroke="#5fd08c" stroke-width="1.6"/>
<path d="M1057.3 524C957.1 657.2 850.0 737.0 698.4 679.4" stroke="#1a1a1a" stroke-width="3" stroke-opacity="0.85"/><path d="M1057.3 524C957.1 657.2 850.0 737.0 698.4 679.4" stroke="#a8a8a8" stroke-width="1.2"/>
<path d="M1086.25 524C1063.6 609.2 1029.3 753.1 965.8 679.4" stroke="#1a1a1a" stroke-width="3" stroke-opacity="0.85"/><path d="M1086.25 524C1063.6 609.2 1029.3 753.1 965.8 679.4" stroke="#a8a8a8" stroke-width="1.2"/>
<path d="M1115.25 524C1166.3 717.0 1201.4 717.2 1233.2 679.4" stroke="#1a1a1a" stroke-width="3" stroke-opacity="0.85"/><path d="M1115.25 524C1166.3 717.0 1201.4 717.2 1233.2 679.4" stroke="#a8a8a8" stroke-width="1.2"/>
<path d="M1144.1 524C1231.0 647.1 1366.4 740.7 1500.6 679.4" stroke="#1a1a1a" stroke-width="3" stroke-opacity="0.85"/><path d="M1144.1 524C1231.0 647.1 1366.4 740.7 1500.6 679.4" stroke="#a8a8a8" stroke-width="1.2"/>
</g>
<rect x="1883" y="377" width="7" height="403" rx="3.5" fill="#242424"/></svg>
</section>
</div></body></html>
